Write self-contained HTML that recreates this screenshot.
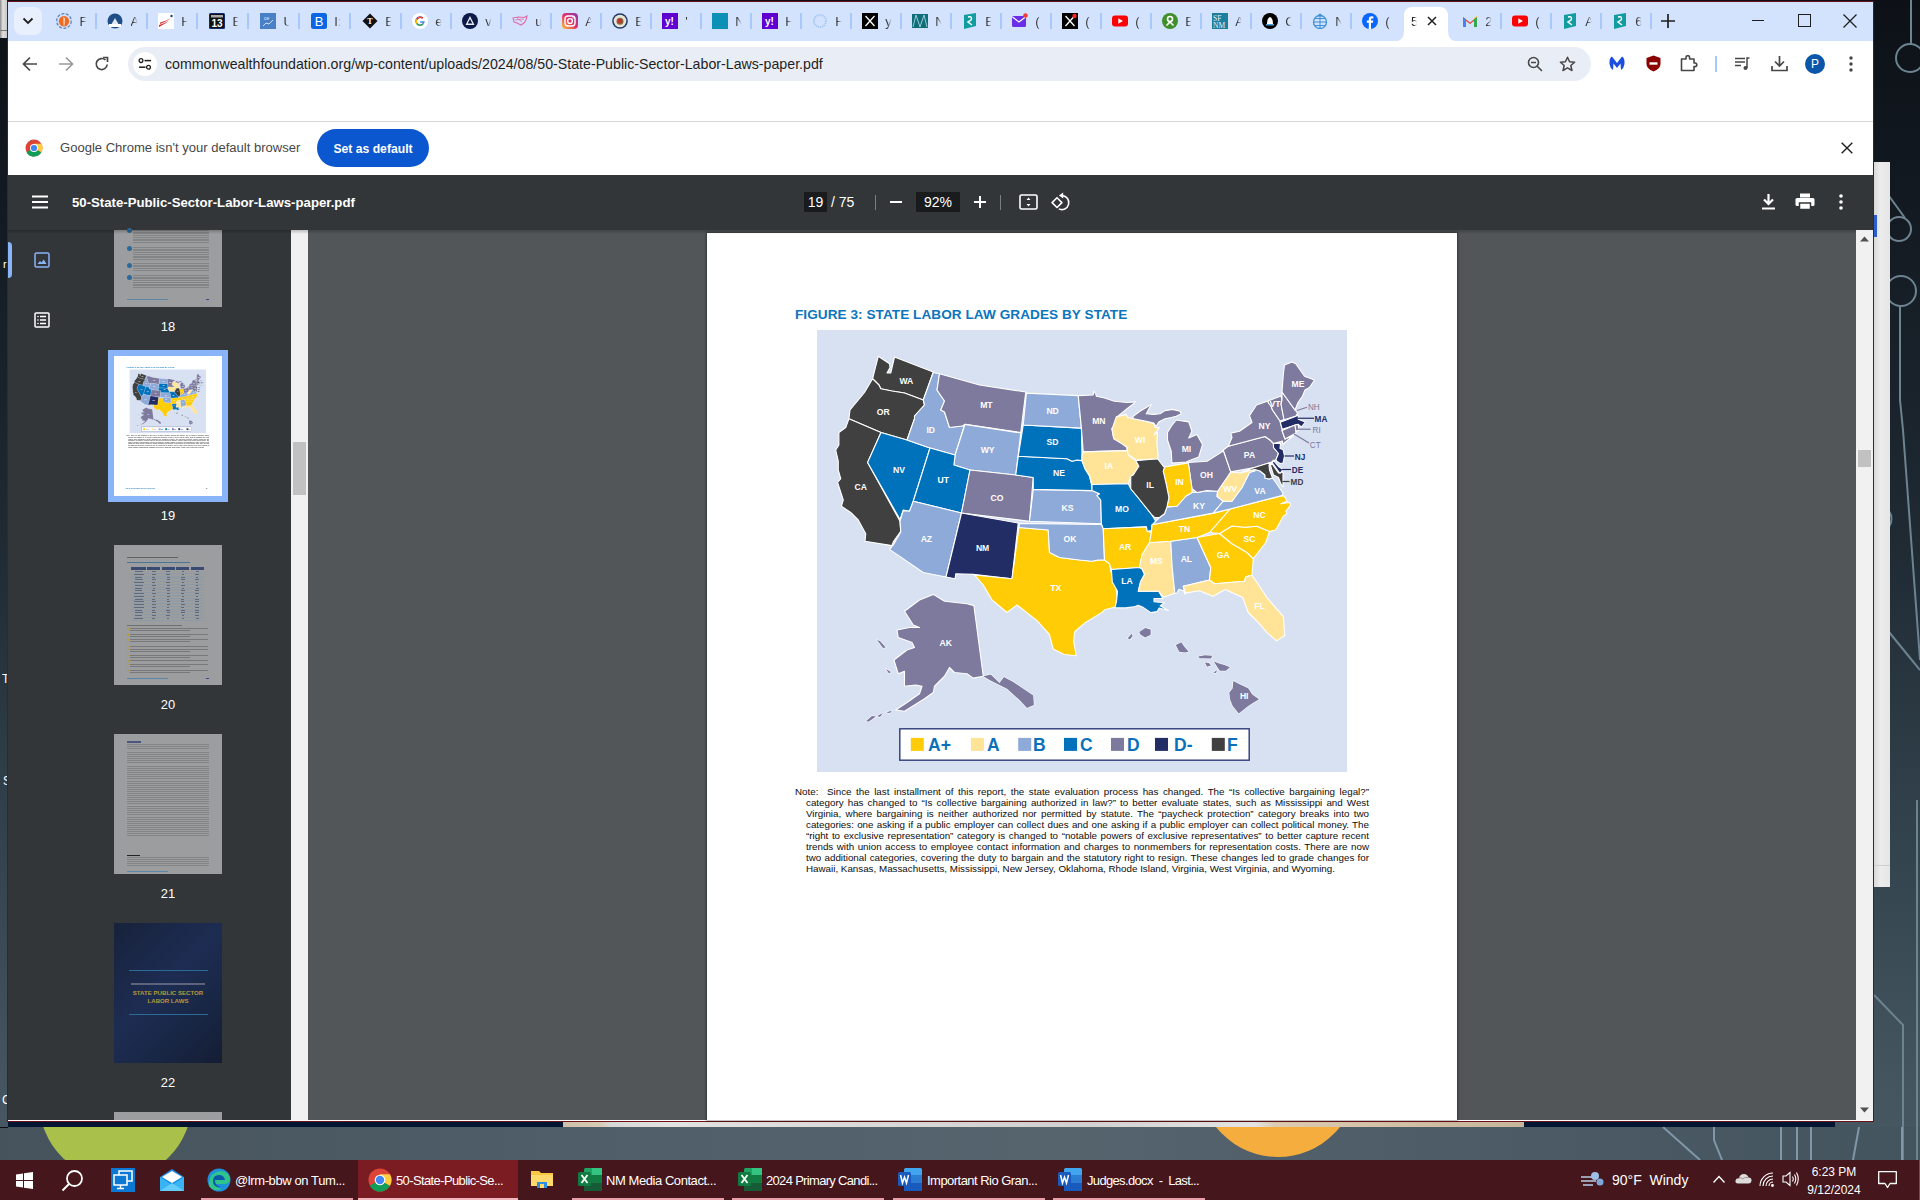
<!DOCTYPE html>
<html><head><meta charset="utf-8"><title>PDF</title>
<style>
*{margin:0;padding:0;box-sizing:border-box}
html,body{width:1920px;height:1200px;overflow:hidden;background:#2b3a44;font-family:"Liberation Sans",sans-serif}
.a{position:absolute}
.tx{position:absolute;white-space:nowrap}

</style></head><body>
<div class="a" style="left:0;top:0;width:1920px;height:1200px;background:linear-gradient(180deg,#0d1117 0%,#141b23 20%,#1f2a33 45%,#33434d 70%,#45555f 90%,#4a5a64 100%)"></div>
<div class="a" style="left:0;top:1127px;width:1920px;height:33px;background:linear-gradient(90deg,#46535c 0%,#4f5e68 30%,#56646e 55%,#4d5c66 75%,#44545e 100%)"></div>
<div class="a" style="left:0;top:0;width:7px;height:38px;background:linear-gradient(90deg,#8a8a8a,#e0e0e0 40%,#c8c8c8)"></div>
<div class="a" style="left:0;top:30px;width:7px;height:1px;background:#777"></div>
<svg class="a" style="left:1874px;top:0" width="46" height="1160" viewBox="1874 0 46 1160">
<g stroke="#6c8390" stroke-width="2" fill="none">
<path d="M1911 0 V44"/><circle cx="1910" cy="58" r="14"/>
<path d="M1889 196 L1905 218"/><circle cx="1899" cy="229" r="12"/>
<circle cx="1901" cy="291" r="15"/><path d="M1900 306 V400 L1903 430 L1920 660"/>
<path d="M1889 511 A14 14 0 0 1 1889 527" />
<path d="M1889 632 L1920 670"/>
<path d="M1874 995 L1903 1025 V1160"/><path d="M1917 800 V1160"/>
</g>
</svg>
<div class="a" style="left:1874px;top:162px;width:16px;height:725px;background:linear-gradient(90deg,#d9d9d9,#ececec 40%,#e6e6e6)"></div>
<div class="a" style="left:1874px;top:215px;width:3px;height:22px;background:#2a5fd0"></div>
<div class="a" style="left:1874px;top:865px;width:16px;height:1px;background:#cfcfcf"></div>
<div class="a" style="left:8px;top:1121px;width:1827px;height:6px;background:#021633"></div>
<div class="a" style="left:563px;top:1121px;width:961px;height:6px;background:linear-gradient(90deg,#cdbfa8 0%,#d8cbb6 4%,#d7d7d7 5%,#e2e2e2 11%,#d0d0d0 53%,#e4e4e4 72%,#dccbb0 74%,#c6b59b 100%)"></div>
<svg class="a" style="left:0;top:1127px" width="1920" height="33" viewBox="0 1127 1920 33">
<circle cx="115.5" cy="1103" r="76" fill="#a9c14a"/>
<circle cx="1278" cy="1078" r="79" fill="#f5ae3d"/>
<g stroke="#7f97a6" stroke-width="2" fill="none">
<path d="M1663 1127 L1700 1160"/><path d="M1714 1127 V1140 L1722 1160"/><path d="M1781 1127 V1160"/><path d="M1797 1127 V1160"/><path d="M1811 1127 V1160"/><path d="M1859 1127 L1853 1160"/><path d="M1902 1127 V1160"/>
</g>
</svg>
<div class="a" style="left:0;top:1127px;width:8px;height:1px;background:#0a0f14"></div>
<div class="tx" style="left:2px;top:672px;font-size:12px;color:#fff;width:5px;overflow:hidden;letter-spacing:0">T</div>
<div class="tx" style="left:3px;top:774px;font-size:12px;color:#fff;width:4px;overflow:hidden">S</div>
<div class="tx" style="left:2px;top:1093px;font-size:12px;color:#fff;width:5px;overflow:hidden">C</div>
<div class="tx" style="left:3px;top:258px;font-size:11px;color:#fff;width:4px;overflow:hidden">r</div>
<div class="a" style="left:7px;top:1px;width:1867px;height:1121px;border:1px solid #6b1016;background:#fff"></div>
<!-- tab strip -->
<div class="a" style="left:8px;top:2px;width:1865px;height:39px;background:#d3e3fd"></div>
<div class="a" style="left:14px;top:7px;width:28px;height:28px;border-radius:8px;background:#e9f0fd"></div>
<svg class="a" style="left:56.0px;top:13px" width="16" height="16" viewBox="0 0 16 16"><circle cx="8" cy="8" r="7.3" fill="none" stroke="#5b7fb8" stroke-width="1.2" stroke-dasharray="3 1.5"/><circle cx="8" cy="8.3" r="5.2" fill="#f26b21"/><path d="M7.5 4 L8.8 5.5 L8.4 12.5 L7.6 12.5 Z" fill="#fff"/></svg>
<div class="tx" style="left:79.5px;top:14px;font-size:13px;color:#3c3c3c;width:7px;overflow:hidden;-webkit-mask-image:linear-gradient(90deg,#000 35%,transparent 95%)">F</div>
<div class="a" style="left:94.5px;top:13px;width:2px;height:16px;background:#a8c7fa"></div>
<svg class="a" style="left:107.0px;top:13px" width="16" height="16" viewBox="0 0 16 16"><circle cx="8" cy="8" r="7.5" fill="#1f4f86"/><path d="M4 12 L8 5 L12 12 Z" fill="#dfe8f2"/><rect x="2" y="11" width="12" height="3" fill="#fff"/></svg>
<div class="tx" style="left:130.5px;top:14px;font-size:13px;color:#3c3c3c;width:7px;overflow:hidden;-webkit-mask-image:linear-gradient(90deg,#000 35%,transparent 95%)">A</div>
<div class="a" style="left:145.5px;top:13px;width:2px;height:16px;background:#a8c7fa"></div>
<svg class="a" style="left:157.8px;top:13px" width="16" height="16" viewBox="0 0 16 16"><rect x="0" y="0" width="16" height="16" fill="#fff"/><path d="M1 14 Q8 11 14 5 Q9 10 1 12 Z" fill="#d7262f"/><path d="M2 11 Q8 9 13 5 Q8 8 2 9.5Z" fill="#e0363e"/><circle cx="13.5" cy="3" r="1.2" fill="#1d3c88"/></svg>
<div class="tx" style="left:181.3px;top:14px;font-size:13px;color:#3c3c3c;width:7px;overflow:hidden;-webkit-mask-image:linear-gradient(90deg,#000 35%,transparent 95%)">H</div>
<div class="a" style="left:196.3px;top:13px;width:2px;height:16px;background:#a8c7fa"></div>
<svg class="a" style="left:208.9px;top:13px" width="16" height="16" viewBox="0 0 16 16"><rect x="0" y="0" width="16" height="16" rx="1.5" fill="#0d2a78"/><rect x="1" y="1" width="14" height="14" fill="#111"/><text x="8" y="14" font-family="Liberation Sans" font-weight="bold" font-size="10" fill="#fff" text-anchor="middle">13</text><rect x="2" y="2" width="12" height="2.5" fill="#aaa"/></svg>
<div class="tx" style="left:232.4px;top:14px;font-size:13px;color:#3c3c3c;width:7px;overflow:hidden;-webkit-mask-image:linear-gradient(90deg,#000 35%,transparent 95%)">E</div>
<div class="a" style="left:247.4px;top:13px;width:2px;height:16px;background:#a8c7fa"></div>
<svg class="a" style="left:259.9px;top:13px" width="16" height="16" viewBox="0 0 16 16"><rect width="16" height="16" fill="#4a80c8"/><path d="M3 13 L6 10 L9 11 L13 7" stroke="#cfe0f5" stroke-width="1" fill="none"/><text x="4" y="7" font-size="5" fill="#e6eef8" font-family="Liberation Sans">ce</text></svg>
<div class="tx" style="left:283.4px;top:14px;font-size:13px;color:#3c3c3c;width:7px;overflow:hidden;-webkit-mask-image:linear-gradient(90deg,#000 35%,transparent 95%)">U</div>
<div class="a" style="left:298.4px;top:13px;width:2px;height:16px;background:#a8c7fa"></div>
<svg class="a" style="left:310.8px;top:13px" width="16" height="16" viewBox="0 0 16 16"><rect width="16" height="16" rx="2.5" fill="#0a66e4"/><text x="8" y="13" font-family="Liberation Sans" font-size="13" fill="#fff" text-anchor="middle">B</text></svg>
<div class="tx" style="left:334.2px;top:14px;font-size:13px;color:#3c3c3c;width:7px;overflow:hidden;-webkit-mask-image:linear-gradient(90deg,#000 35%,transparent 95%)">I:</div>
<div class="a" style="left:349.2px;top:13px;width:2px;height:16px;background:#a8c7fa"></div>
<svg class="a" style="left:361.8px;top:13px" width="16" height="16" viewBox="0 0 16 16"><path d="M8 0.5 L15.5 8 L8 15.5 L0.5 8 Z" fill="#111"/><text x="8" y="11" font-family="Liberation Serif" font-weight="bold" font-size="8" fill="#fff" text-anchor="middle">T</text></svg>
<div class="tx" style="left:385.2px;top:14px;font-size:13px;color:#3c3c3c;width:7px;overflow:hidden;-webkit-mask-image:linear-gradient(90deg,#000 35%,transparent 95%)">E</div>
<div class="a" style="left:400.2px;top:13px;width:2px;height:16px;background:#a8c7fa"></div>
<svg class="a" style="left:411.8px;top:13px" width="16" height="16" viewBox="0 0 16 16"><circle cx="8" cy="8" r="8" fill="#fff"/><path d="M12.8 8.2 H8.2 V9.8 H11 A3.2 3.2 0 1 1 10.2 5.7 L11.4 4.6 A4.8 4.8 0 1 0 12.8 8.2 Z" fill="#4285f4"/><path d="M4.1 6 A4.8 4.8 0 0 1 11.4 4.6 L10.2 5.7 A3.2 3.2 0 0 0 5.4 6.9Z" fill="#ea4335"/><path d="M4.1 6 L5.4 6.9 A3.2 3.2 0 0 0 5.6 10.2 L4.3 11 A4.8 4.8 0 0 1 4.1 6Z" fill="#fbbc05"/><path d="M4.3 11 L5.6 10.2 A3.2 3.2 0 0 0 10.4 10.5 L11.6 11.5 A4.8 4.8 0 0 1 4.3 11Z" fill="#34a853"/></svg>
<div class="tx" style="left:435.2px;top:14px;font-size:13px;color:#3c3c3c;width:7px;overflow:hidden;-webkit-mask-image:linear-gradient(90deg,#000 35%,transparent 95%)">e</div>
<div class="a" style="left:450.2px;top:13px;width:2px;height:16px;background:#a8c7fa"></div>
<svg class="a" style="left:461.8px;top:13px" width="16" height="16" viewBox="0 0 16 16"><circle cx="8" cy="8" r="8" fill="#0d1947"/><path d="M8 3 L12.5 12 L3.5 12 Z M8 6 L10.3 10.5 L5.7 10.5Z" fill="#e9ecf4" fill-rule="evenodd"/></svg>
<div class="tx" style="left:485.2px;top:14px;font-size:13px;color:#3c3c3c;width:7px;overflow:hidden;-webkit-mask-image:linear-gradient(90deg,#000 35%,transparent 95%)">v</div>
<div class="a" style="left:500.2px;top:13px;width:2px;height:16px;background:#a8c7fa"></div>
<svg class="a" style="left:511.8px;top:13px" width="16" height="16" viewBox="0 0 16 16"><path d="M1 5 L6 4 L12 4.5 L15 3 L14 7 L12 10 L9 12 L5 10 L2 9 Z" fill="none" stroke="#e36aa8" stroke-width="1.1"/><path d="M3 7 L12 6 M5 5 L10 9" stroke="#e36aa8" stroke-width="0.8"/></svg>
<div class="tx" style="left:535.2px;top:14px;font-size:13px;color:#3c3c3c;width:7px;overflow:hidden;-webkit-mask-image:linear-gradient(90deg,#000 35%,transparent 95%)">u</div>
<div class="a" style="left:550.2px;top:13px;width:2px;height:16px;background:#a8c7fa"></div>
<svg class="a" style="left:561.8px;top:13px" width="16" height="16" viewBox="0 0 16 16"><defs><linearGradient id="ig" x1="0" y1="1" x2="1" y2="0"><stop offset="0" stop-color="#fdc830"/><stop offset="0.5" stop-color="#e1306c"/><stop offset="1" stop-color="#833ab4"/></linearGradient></defs><rect width="16" height="16" rx="4" fill="url(#ig)"/><rect x="3" y="3" width="10" height="10" rx="3" fill="none" stroke="#fff" stroke-width="1.4"/><circle cx="8" cy="8" r="2.4" fill="none" stroke="#fff" stroke-width="1.4"/><circle cx="11" cy="5" r="0.7" fill="#fff"/></svg>
<div class="tx" style="left:585.2px;top:14px;font-size:13px;color:#3c3c3c;width:7px;overflow:hidden;-webkit-mask-image:linear-gradient(90deg,#000 35%,transparent 95%)">A</div>
<div class="a" style="left:600.2px;top:13px;width:2px;height:16px;background:#a8c7fa"></div>
<svg class="a" style="left:611.8px;top:13px" width="16" height="16" viewBox="0 0 16 16"><circle cx="8" cy="8" r="7.8" fill="#1c3a6e"/><circle cx="8" cy="8" r="6.3" fill="#e9e4d6"/><circle cx="8" cy="8.3" r="3.5" fill="#8a6a3a"/><rect x="6" y="6" width="4" height="4" fill="#b33"/></svg>
<div class="tx" style="left:635.2px;top:14px;font-size:13px;color:#3c3c3c;width:7px;overflow:hidden;-webkit-mask-image:linear-gradient(90deg,#000 35%,transparent 95%)">E</div>
<div class="a" style="left:650.2px;top:13px;width:2px;height:16px;background:#a8c7fa"></div>
<svg class="a" style="left:661.8px;top:13px" width="16" height="16" viewBox="0 0 16 16"><rect width="16" height="16" fill="#6001d2"/><text x="7.5" y="12" font-family="Liberation Sans" font-weight="bold" font-size="10" fill="#fff" text-anchor="middle">y!</text></svg>
<div class="tx" style="left:685.2px;top:14px;font-size:13px;color:#3c3c3c;width:7px;overflow:hidden;-webkit-mask-image:linear-gradient(90deg,#000 35%,transparent 95%)">'</div>
<div class="a" style="left:700.2px;top:13px;width:2px;height:16px;background:#a8c7fa"></div>
<svg class="a" style="left:711.8px;top:13px" width="16" height="16" viewBox="0 0 16 16"><rect width="16" height="16" fill="#0d90b6"/></svg>
<div class="tx" style="left:735.2px;top:14px;font-size:13px;color:#3c3c3c;width:7px;overflow:hidden;-webkit-mask-image:linear-gradient(90deg,#000 35%,transparent 95%)">N</div>
<div class="a" style="left:750.2px;top:13px;width:2px;height:16px;background:#a8c7fa"></div>
<svg class="a" style="left:761.8px;top:13px" width="16" height="16" viewBox="0 0 16 16"><rect width="16" height="16" fill="#6001d2"/><text x="7.5" y="12" font-family="Liberation Sans" font-weight="bold" font-size="10" fill="#fff" text-anchor="middle">y!</text></svg>
<div class="tx" style="left:785.2px;top:14px;font-size:13px;color:#3c3c3c;width:7px;overflow:hidden;-webkit-mask-image:linear-gradient(90deg,#000 35%,transparent 95%)">H</div>
<div class="a" style="left:800.2px;top:13px;width:2px;height:16px;background:#a8c7fa"></div>
<svg class="a" style="left:811.8px;top:13px" width="16" height="16" viewBox="0 0 16 16"><circle cx="8" cy="8" r="6" fill="none" stroke="#9ec3ee" stroke-width="2" stroke-dasharray="1 1"/></svg>
<div class="tx" style="left:835.2px;top:14px;font-size:13px;color:#3c3c3c;width:7px;overflow:hidden;-webkit-mask-image:linear-gradient(90deg,#000 35%,transparent 95%)">H</div>
<div class="a" style="left:850.2px;top:13px;width:2px;height:16px;background:#a8c7fa"></div>
<svg class="a" style="left:861.8px;top:13px" width="16" height="16" viewBox="0 0 16 16"><rect width="16" height="16" fill="#000"/><path d="M3.5 3 L12.5 13 M12.5 3 L3.5 13" stroke="#fff" stroke-width="1.3"/></svg>
<div class="tx" style="left:885.2px;top:14px;font-size:13px;color:#3c3c3c;width:7px;overflow:hidden;-webkit-mask-image:linear-gradient(90deg,#000 35%,transparent 95%)">y</div>
<div class="a" style="left:900.2px;top:13px;width:2px;height:16px;background:#a8c7fa"></div>
<svg class="a" style="left:911.8px;top:13px" width="16" height="16" viewBox="0 0 16 16"><rect y="1" width="16" height="14" fill="#0d6d78"/><path d="M1 14 L4 2 L8 14 L12 2 L15 14" stroke="#a9d6db" stroke-width="0.9" fill="none"/></svg>
<div class="tx" style="left:935.2px;top:14px;font-size:13px;color:#3c3c3c;width:7px;overflow:hidden;-webkit-mask-image:linear-gradient(90deg,#000 35%,transparent 95%)">N</div>
<div class="a" style="left:950.2px;top:13px;width:2px;height:16px;background:#a8c7fa"></div>
<svg class="a" style="left:961.8px;top:13px" width="16" height="16" viewBox="0 0 16 16"><path d="M2 2 L14 0 L14 13 L2 16 Z" fill="#119ca0"/><path d="M6 4 Q11 3 9 7 L6 9 L10 12" stroke="#fff" stroke-width="1.5" fill="none"/></svg>
<div class="tx" style="left:985.2px;top:14px;font-size:13px;color:#3c3c3c;width:7px;overflow:hidden;-webkit-mask-image:linear-gradient(90deg,#000 35%,transparent 95%)">E</div>
<div class="a" style="left:1000.2px;top:13px;width:2px;height:16px;background:#a8c7fa"></div>
<svg class="a" style="left:1011.8px;top:13px" width="16" height="16" viewBox="0 0 16 16"><rect x="0" y="3" width="14" height="11" rx="1.5" fill="#6a2ee8"/><path d="M0.5 4 L7 9 L13.5 4" stroke="#fff" stroke-width="1.2" fill="none"/><circle cx="13.5" cy="2.5" r="2.3" fill="#f43b3b"/></svg>
<div class="tx" style="left:1035.2px;top:14px;font-size:13px;color:#3c3c3c;width:7px;overflow:hidden;-webkit-mask-image:linear-gradient(90deg,#000 35%,transparent 95%)">(</div>
<div class="a" style="left:1050.2px;top:13px;width:2px;height:16px;background:#a8c7fa"></div>
<svg class="a" style="left:1061.8px;top:13px" width="16" height="16" viewBox="0 0 16 16"><rect width="16" height="16" fill="#000"/><path d="M3.5 3 L12.5 13 M12.5 3 L3.5 13" stroke="#fff" stroke-width="1.3"/><circle cx="12.5" cy="3" r="2.2" fill="#f22"/></svg>
<div class="tx" style="left:1085.2px;top:14px;font-size:13px;color:#3c3c3c;width:7px;overflow:hidden;-webkit-mask-image:linear-gradient(90deg,#000 35%,transparent 95%)">(</div>
<div class="a" style="left:1100.2px;top:13px;width:2px;height:16px;background:#a8c7fa"></div>
<svg class="a" style="left:1111.8px;top:13px" width="16" height="16" viewBox="0 0 16 16"><rect x="0" y="2.5" width="16" height="11" rx="3" fill="#ff0000"/><path d="M6.3 5.3 L11 8 L6.3 10.7 Z" fill="#fff"/></svg>
<div class="tx" style="left:1135.2px;top:14px;font-size:13px;color:#3c3c3c;width:7px;overflow:hidden;-webkit-mask-image:linear-gradient(90deg,#000 35%,transparent 95%)">(</div>
<div class="a" style="left:1150.2px;top:13px;width:2px;height:16px;background:#a8c7fa"></div>
<svg class="a" style="left:1161.8px;top:13px" width="16" height="16" viewBox="0 0 16 16"><circle cx="8" cy="8" r="8" fill="#3f8f2a"/><circle cx="8" cy="6" r="2.5" fill="none" stroke="#fff" stroke-width="1.6"/><path d="M4.5 12.5 L8 9 L11.5 12.5" stroke="#fff" stroke-width="1.6" fill="none"/></svg>
<div class="tx" style="left:1185.2px;top:14px;font-size:13px;color:#3c3c3c;width:7px;overflow:hidden;-webkit-mask-image:linear-gradient(90deg,#000 35%,transparent 95%)">E</div>
<div class="a" style="left:1200.2px;top:13px;width:2px;height:16px;background:#a8c7fa"></div>
<svg class="a" style="left:1211.8px;top:13px" width="16" height="16" viewBox="0 0 16 16"><rect width="16" height="16" fill="#1b7fa0"/><text x="1" y="7.5" font-family="Liberation Serif" font-size="7.5" fill="#e8f2f6">SF</text><text x="1" y="15" font-family="Liberation Serif" font-size="7.5" fill="#e8f2f6">NM</text></svg>
<div class="tx" style="left:1235.2px;top:14px;font-size:13px;color:#3c3c3c;width:7px;overflow:hidden;-webkit-mask-image:linear-gradient(90deg,#000 35%,transparent 95%)">A</div>
<div class="a" style="left:1250.2px;top:13px;width:2px;height:16px;background:#a8c7fa"></div>
<svg class="a" style="left:1261.8px;top:13px" width="16" height="16" viewBox="0 0 16 16"><circle cx="8" cy="8" r="8" fill="#000"/><path d="M5 11 Q5 5 8 4 Q11 5 11 11 Z" fill="#fff"/><rect x="4" y="11" width="8" height="1.5" fill="#4aa3df"/></svg>
<div class="tx" style="left:1285.2px;top:14px;font-size:13px;color:#3c3c3c;width:7px;overflow:hidden;-webkit-mask-image:linear-gradient(90deg,#000 35%,transparent 95%)">C</div>
<div class="a" style="left:1300.2px;top:13px;width:2px;height:16px;background:#a8c7fa"></div>
<svg class="a" style="left:1311.8px;top:13px" width="16" height="16" viewBox="0 0 16 16"><circle cx="8" cy="9" r="6.5" fill="none" stroke="#3d8fd8" stroke-width="1.3"/><path d="M1.5 9 H14.5 M8 2.5 V15.5 M3 5.5 H13 M3 12.5 H13" stroke="#3d8fd8" stroke-width="1"/><circle cx="8" cy="2" r="1.5" fill="#3d8fd8"/></svg>
<div class="tx" style="left:1335.2px;top:14px;font-size:13px;color:#3c3c3c;width:7px;overflow:hidden;-webkit-mask-image:linear-gradient(90deg,#000 35%,transparent 95%)">N</div>
<div class="a" style="left:1350.2px;top:13px;width:2px;height:16px;background:#a8c7fa"></div>
<svg class="a" style="left:1361.8px;top:13px" width="16" height="16" viewBox="0 0 16 16"><circle cx="8" cy="8" r="8" fill="#0866ff"/><path d="M9 16 V9.8 H11 L11.3 7.6 H9 V6.3 Q9 5.4 10 5.4 H11.4 V3.5 Q10.5 3.3 9.6 3.3 Q6.8 3.3 6.8 6.1 V7.6 H4.8 V9.8 H6.8 V16 Z" fill="#fff"/></svg>
<div class="tx" style="left:1385.2px;top:14px;font-size:13px;color:#3c3c3c;width:7px;overflow:hidden;-webkit-mask-image:linear-gradient(90deg,#000 35%,transparent 95%)">(</div>
<svg class="a" style="left:1461.8px;top:13px" width="16" height="16" viewBox="0 0 16 16"><path d="M1 14 V4 L8 9.5 L15 4 V14 H12 V8 L8 11 L4 8 V14 Z" fill="#ea4335"/><path d="M1 14 V4 L4 6.3 V14Z" fill="#4285f4"/><path d="M15 14 V4 L12 6.3 V14Z" fill="#34a853"/><path d="M12 6.3 L15 4 V3 L12 5.3Z" fill="#fbbc04"/></svg>
<div class="tx" style="left:1485.2px;top:14px;font-size:13px;color:#3c3c3c;width:7px;overflow:hidden;-webkit-mask-image:linear-gradient(90deg,#000 35%,transparent 95%)">2</div>
<div class="a" style="left:1500.2px;top:13px;width:2px;height:16px;background:#a8c7fa"></div>
<svg class="a" style="left:1511.8px;top:13px" width="16" height="16" viewBox="0 0 16 16"><rect x="0" y="2.5" width="16" height="11" rx="3" fill="#ff0000"/><path d="M6.3 5.3 L11 8 L6.3 10.7 Z" fill="#fff"/></svg>
<div class="tx" style="left:1535.2px;top:14px;font-size:13px;color:#3c3c3c;width:7px;overflow:hidden;-webkit-mask-image:linear-gradient(90deg,#000 35%,transparent 95%)">(</div>
<div class="a" style="left:1550.2px;top:13px;width:2px;height:16px;background:#a8c7fa"></div>
<svg class="a" style="left:1561.8px;top:13px" width="16" height="16" viewBox="0 0 16 16"><path d="M2 2 L14 0 L14 13 L2 16 Z" fill="#119ca0"/><path d="M6 4 Q11 3 9 7 L6 9 L10 12" stroke="#fff" stroke-width="1.5" fill="none"/></svg>
<div class="tx" style="left:1585.2px;top:14px;font-size:13px;color:#3c3c3c;width:7px;overflow:hidden;-webkit-mask-image:linear-gradient(90deg,#000 35%,transparent 95%)">A</div>
<div class="a" style="left:1600.2px;top:13px;width:2px;height:16px;background:#a8c7fa"></div>
<svg class="a" style="left:1611.8px;top:13px" width="16" height="16" viewBox="0 0 16 16"><path d="M2 2 L14 0 L14 13 L2 16 Z" fill="#119ca0"/><path d="M6 4 Q11 3 9 7 L6 9 L10 12" stroke="#fff" stroke-width="1.5" fill="none"/></svg>
<div class="tx" style="left:1635.2px;top:14px;font-size:13px;color:#3c3c3c;width:7px;overflow:hidden;-webkit-mask-image:linear-gradient(90deg,#000 35%,transparent 95%)">6</div>
<div class="a" style="left:1650.2px;top:13px;width:2px;height:16px;background:#a8c7fa"></div>
<div class="a" style="left:1404px;top:7px;width:44px;height:35px;background:#fff;border-radius:8px 8px 0 0"></div>
<svg class="a" style="left:1394px;top:31px" width="64" height="11" viewBox="0 0 64 11"><path d="M0 10.5 Q10 10.5 10 0 L10 11 L0 11 Z M64 10.5 Q54 10.5 54 0 L54 11 L64 11 Z" fill="#fff"/></svg>
<div class="tx" style="left:1411px;top:14px;font-size:13px;color:#1f1f1f;width:6px;overflow:hidden;-webkit-mask-image:linear-gradient(90deg,#000 40%,transparent 100%)">5</div>
<svg class="a" style="left:1427px;top:16px" width="10" height="10" viewBox="0 0 10 10"><path d="M1 1 L9 9 M9 1 L1 9" stroke="#1f1f1f" stroke-width="1.5"/></svg>
<svg class="a" style="left:1661px;top:14px" width="14" height="14" viewBox="0 0 14 14"><path d="M7 0 V14 M0 7 H14" stroke="#1f1f1f" stroke-width="1.7"/></svg>
<div class="a" style="left:1752px;top:20px;width:12px;height:1px;background:#1f1f1f"></div>
<div class="a" style="left:1798px;top:14px;width:13px;height:13px;border:1.3px solid #1f1f1f"></div>
<svg class="a" style="left:1843px;top:14px" width="14" height="14" viewBox="0 0 14 14"><path d="M0.5 0.5 L13.5 13.5 M13.5 0.5 L0.5 13.5" stroke="#1f1f1f" stroke-width="1.3"/></svg>
<svg class="a" style="left:22px;top:17px" width="12" height="8" viewBox="0 0 12 8"><path d="M1.5 1.5 L6 6 L10.5 1.5" stroke="#1f1f1f" stroke-width="1.8" fill="none"/></svg>
<!-- toolbar -->
<div class="a" style="left:8px;top:41px;width:1865px;height:80px;background:#fff;border-radius:8px 8px 0 0"></div>
<div class="a" style="left:128px;top:47px;width:1463px;height:34px;border-radius:17px;background:#e9eef6"></div>
<div class="a" style="left:133px;top:52px;width:24px;height:24px;border-radius:12px;background:#fff"></div>
<div class="tx" style="left:165px;top:55.5px;font-size:14.2px;color:#1f1f1f">commonwealthfoundation.org/wp-content/uploads/2024/08/50-State-Public-Sector-Labor-Laws-paper.pdf</div>
<div class="a" style="left:8px;top:121px;width:1865px;height:1px;background:#d6d6d6"></div>
<svg class="a" style="left:22px;top:56px" width="16" height="16" viewBox="0 0 16 16"><path d="M15 8 H2 M8 1.5 L1.5 8 L8 14.5" stroke="#474747" stroke-width="1.7" fill="none"/></svg>
<svg class="a" style="left:58px;top:56px" width="16" height="16" viewBox="0 0 16 16"><path d="M1 8 H14 M8 1.5 L14.5 8 L8 14.5" stroke="#9a9a9a" stroke-width="1.7" fill="none"/></svg>
<svg class="a" style="left:94px;top:56px" width="16" height="16" viewBox="0 0 16 16"><path d="M13.2 8.5 A5.5 5.5 0 1 1 11.5 4" stroke="#474747" stroke-width="1.7" fill="none"/><path d="M9 1.5 H13.5 V6" stroke="#474747" stroke-width="1.7" fill="none"/></svg>
<svg class="a" style="left:138px;top:58px" width="14" height="12" viewBox="0 0 14 12"><circle cx="3" cy="2.6" r="1.9" stroke="#1f1f1f" stroke-width="1.3" fill="none"/><path d="M6.5 2.6 H13" stroke="#1f1f1f" stroke-width="1.5"/><circle cx="10.5" cy="9.2" r="1.9" stroke="#1f1f1f" stroke-width="1.3" fill="none"/><path d="M1 9.2 H7.5" stroke="#1f1f1f" stroke-width="1.5"/></svg>
<svg class="a" style="left:1527px;top:56px" width="16" height="16" viewBox="0 0 16 16"><circle cx="6.5" cy="6.5" r="5" stroke="#474747" stroke-width="1.6" fill="none"/><path d="M10.2 10.2 L15 15 M4 6.5 H9" stroke="#474747" stroke-width="1.6"/></svg>
<svg class="a" style="left:1559px;top:56px" width="17" height="16" viewBox="0 0 17 16"><path d="M8.5 1.2 L10.6 5.8 L15.6 6.2 L11.8 9.5 L13 14.5 L8.5 11.8 L4 14.5 L5.2 9.5 L1.4 6.2 L6.4 5.8 Z" stroke="#474747" stroke-width="1.5" fill="none" stroke-linejoin="round"/></svg>
<svg class="a" style="left:1608px;top:55px" width="18" height="17" viewBox="0 0 18 17"><path d="M1.5 9 Q1 3 4 1.5 L9 8 L14 1.5 Q17 3 16.5 9 Q16 13 13 15 L12.5 8.5 L9 13 L5.5 8.5 L5 15 Q2 13 1.5 9Z" fill="#1d4ede"/></svg>
<svg class="a" style="left:1646px;top:55px" width="15" height="17" viewBox="0 0 15 17"><path d="M7.5 0.5 L14.5 3 V9 Q14.5 14 7.5 16.5 Q0.5 14 0.5 9 V3 Z" fill="#8b0000"/><rect x="3.5" y="7.3" width="8" height="2.4" fill="#fff"/></svg>
<svg class="a" style="left:1680px;top:55px" width="18" height="17" viewBox="0 0 18 17"><path d="M1.5 4 H6 V2.5 A1.8 1.8 0 0 1 9.6 2.5 V4 H14 V8 H15 A1.8 1.8 0 0 1 15 11.6 H14 V15.5 H1.5 Z" stroke="#474747" stroke-width="1.6" fill="none" stroke-linejoin="round"/></svg>
<div class="a" style="left:1715px;top:56px;width:2px;height:16px;background:#a8c7fa"></div>
<svg class="a" style="left:1735px;top:57px" width="16" height="14" viewBox="0 0 16 14"><path d="M0 1.5 H10 M0 5 H10 M0 8.5 H6" stroke="#474747" stroke-width="1.4"/><path d="M14.5 1 H12 V11" stroke="#474747" stroke-width="1.5" fill="none"/><circle cx="10.5" cy="11" r="2" fill="#474747"/></svg>
<svg class="a" style="left:1771px;top:55px" width="17" height="17" viewBox="0 0 17 17"><path d="M8.5 1 V11 M4 6.5 L8.5 11 L13 6.5 M1 11 V15.5 H16 V11" stroke="#474747" stroke-width="1.7" fill="none"/></svg>
<div class="a" style="left:1805px;top:54px;width:20px;height:20px;border-radius:10px;background:#0b56a8;color:#fff;font-size:12px;line-height:20px;text-align:center">P</div>
<svg class="a" style="left:1849px;top:56px" width="4" height="16" viewBox="0 0 4 16"><circle cx="2" cy="2" r="1.7" fill="#474747"/><circle cx="2" cy="8" r="1.7" fill="#474747"/><circle cx="2" cy="14" r="1.7" fill="#474747"/></svg>

<!-- infobar -->
<div class="a" style="left:8px;top:122px;width:1865px;height:53px;background:#fff"></div>
<svg class="a" style="left:25px;top:139px" width="18" height="18" viewBox="0 0 18 18"><circle cx="9" cy="9" r="8.5" fill="#db4437"/><path d="M9 9 L1.6 13.25 A8.5 8.5 0 0 0 9 17.5 A8.5 8.5 0 0 0 16.4 13.25 Z" fill="#0f9d58"/><path d="M9 9 L16.4 13.25 A8.5 8.5 0 0 0 16.4 4.75 L9 4.75Z" fill="#ffcd40"/><path d="M9 9 L9 17.5 A8.5 8.5 0 0 1 1.6 13.25Z" fill="#0f9d58"/><circle cx="9" cy="9" r="4" fill="#fff"/><circle cx="9" cy="9" r="3.1" fill="#4285f4"/></svg>
<div class="tx" style="left:60px;top:140px;font-size:13.05px;color:#474747">Google Chrome isn't your default browser</div>
<div class="a" style="left:317px;top:129px;width:112px;height:38px;border-radius:19px;background:#0b57d0"></div>
<div class="tx" style="left:317px;top:141.5px;width:112px;text-align:center;font-size:12.2px;font-weight:bold;color:#fff">Set as default</div>
<svg class="a" style="left:1841px;top:142px" width="12" height="12" viewBox="0 0 12 12"><path d="M0.7 0.7 L11.3 11.3 M11.3 0.7 L0.7 11.3" stroke="#1f1f1f" stroke-width="1.4"/></svg>

<!-- pdf toolbar -->
<div class="a" style="left:8px;top:175px;width:1865px;height:55px;background:#323639"></div>
<svg class="a" style="left:32px;top:195px" width="16" height="14" viewBox="0 0 16 14"><path d="M0 1.5 H16 M0 7 H16 M0 12.5 H16" stroke="#fff" stroke-width="2"/></svg>
<div class="tx" style="left:72px;top:195px;font-size:13.2px;font-weight:bold;color:#fff">50-State-Public-Sector-Labor-Laws-paper.pdf</div>
<div class="a" style="left:804px;top:192px;width:23px;height:20px;background:#191b1c"></div>
<div class="tx" style="left:804px;top:194px;width:23px;text-align:center;font-size:14px;color:#fff">19</div>
<div class="tx" style="left:831px;top:194px;font-size:14px;color:#fff">/ 75</div>
<div class="a" style="left:875px;top:195px;width:1px;height:15px;background:#7b7e80"></div>
<div class="a" style="left:890px;top:201px;width:12px;height:2px;background:#fff"></div>
<div class="a" style="left:916px;top:192px;width:44px;height:20px;background:#191b1c"></div>
<div class="tx" style="left:916px;top:194px;width:44px;text-align:center;font-size:14px;color:#fff">92%</div>
<svg class="a" style="left:974px;top:196px" width="12" height="12" viewBox="0 0 12 12"><path d="M6 0 V12 M0 6 H12" stroke="#fff" stroke-width="2"/></svg>
<div class="a" style="left:1000px;top:195px;width:1px;height:15px;background:#7b7e80"></div>
<svg class="a" style="left:1019px;top:194px" width="19" height="16" viewBox="0 0 19 16"><rect x="1" y="1" width="17" height="14" rx="1.5" stroke="#fff" stroke-width="1.6" fill="none"/><path d="M9.5 3.5 L7.5 6 H11.5Z M9.5 12.5 L7.5 10 H11.5Z" fill="#fff"/></svg>
<svg class="a" style="left:1051px;top:192px" width="20" height="20" viewBox="0 0 20 20"><path d="M6 5.7 L10.9 10.6 L6 15.5 L1.1 10.6 Z" stroke="#fff" stroke-width="1.6" fill="none" stroke-linejoin="round"/><path d="M11.3 3.6 A7 7 0 1 1 7.8 16.9" stroke="#fff" stroke-width="1.6" fill="none"/><path d="M12.2 0.6 L7.9 3.6 L12.2 6.6 Z" fill="#fff"/></svg>
<svg class="a" style="left:1761px;top:193px" width="15" height="17" viewBox="0 0 15 17"><path d="M7.5 1 V11 M3 6.5 L7.5 11 L12 6.5" stroke="#fff" stroke-width="2.2" fill="none"/><path d="M1 15.5 H14" stroke="#fff" stroke-width="2"/></svg>
<svg class="a" style="left:1795px;top:193px" width="20" height="17" viewBox="0 0 20 17"><rect x="5" y="0.5" width="10" height="4" fill="#fff"/><rect x="0.5" y="5" width="19" height="8" rx="1.5" fill="#fff"/><rect x="4.5" y="10" width="11" height="6.5" fill="#fff" stroke="#323639" stroke-width="1.5"/></svg>
<svg class="a" style="left:1839px;top:194px" width="4" height="16" viewBox="0 0 4 16"><circle cx="2" cy="2" r="1.8" fill="#fff"/><circle cx="2" cy="8" r="1.8" fill="#fff"/><circle cx="2" cy="14" r="1.8" fill="#fff"/></svg>

<!-- sidebar -->
<div class="a" style="left:8px;top:230px;width:283px;height:890px;background:#323639"></div>
<div class="a" style="left:8px;top:242px;width:4px;height:36px;background:#8ab4f8;border-radius:0 4px 4px 0"></div>
<svg class="a" style="left:34px;top:252px" width="16" height="16" viewBox="0 0 16 16"><rect x="1" y="1" width="14" height="14" rx="1.5" stroke="#8ab4f8" stroke-width="1.5" fill="none"/><path d="M3.5 12 L6 9 L7.5 10.5 L9.8 7.5 L12.5 12 Z" fill="#8ab4f8"/></svg>
<svg class="a" style="left:34px;top:312px" width="16" height="16" viewBox="0 0 16 16"><rect x="1" y="1" width="14" height="14" rx="1" stroke="#fff" stroke-width="1.5" fill="none"/><path d="M6 4.5 H12 M6 8 H12 M6 11.5 H12" stroke="#fff" stroke-width="1.4"/><circle cx="4" cy="4.5" r="0.8" fill="#fff"/><circle cx="4" cy="8" r="0.8" fill="#fff"/><circle cx="4" cy="11.5" r="0.8" fill="#fff"/></svg>
<div class="a" style="left:114px;top:230px;width:108px;height:77px;background:#9c9d9e"></div>
<div class="a" style="left:133px;top:230px;width:76px;height:13px;background:repeating-linear-gradient(180deg,rgba(40,42,46,0.22) 0 1px,transparent 1px 1.7px)"></div>
<div class="a" style="left:133px;top:247px;width:76px;height:13px;background:repeating-linear-gradient(180deg,rgba(40,42,46,0.22) 0 1px,transparent 1px 1.7px)"></div>
<div class="a" style="left:133px;top:263px;width:76px;height:9px;background:repeating-linear-gradient(180deg,rgba(40,42,46,0.22) 0 1px,transparent 1px 1.7px)"></div>
<div class="a" style="left:133px;top:275px;width:76px;height:14px;background:repeating-linear-gradient(180deg,rgba(40,42,46,0.22) 0 1px,transparent 1px 1.7px)"></div>
<div class="a" style="left:126.5px;top:228px;width:5px;height:5px;border-radius:3px;background:#2b6a9a"></div>
<div class="a" style="left:126.5px;top:246px;width:5px;height:5px;border-radius:3px;background:#2b6a9a"></div>
<div class="a" style="left:126.5px;top:263px;width:5px;height:5px;border-radius:3px;background:#2b6a9a"></div>
<div class="a" style="left:126.5px;top:275px;width:5px;height:5px;border-radius:3px;background:#2b6a9a"></div>
<div class="a" style="left:127px;top:299px;width:41px;height:1px;background:#5c86a8"></div>
<div class="a" style="left:206px;top:299px;width:3px;height:1px;background:#3a4a7a"></div>
<div class="a" style="left:108px;top:350px;width:120px;height:152px;background:#8ab4f8"></div>
<div class="a" style="left:114px;top:356px;width:108px;height:140px;background:#fff;overflow:hidden"><div class="a" style="left:-101.8px;top:-33.55px;width:1920px;height:1300px;transform:scale(0.144);transform-origin:0 0"><div class="tx" style="left:795px;top:307px;font-size:13.6px;font-weight:bold;color:#0b75bd;letter-spacing:0.05px">FIGURE 3: STATE LABOR LAW GRADES BY STATE</div>
<svg class="a" style="left:817px;top:330px" width="530" height="442" viewBox="817 330 530 442">
<rect x="817" y="330" width="530" height="442" fill="#d8e1f2"/>
<g stroke="#fff" stroke-width="1.1" stroke-linejoin="round">
<polygon fill="#404041" points="878.25,356.25 889.50,363.75 890.00,367.50 887.00,373.00 890.75,373.00 894.50,357.00 933.25,371.90 923.25,400.00 904.50,393.00 892.00,391.00 880.75,388.75 879.00,385.00 872.60,378.75 874.50,371.00"/>
<polygon fill="#404041" points="872.60,378.75 879.00,385.00 880.75,388.75 892.00,391.00 904.50,393.00 923.25,400.00 924.50,405.00 914.50,416.00 914.50,418.75 907.00,440.00 881.00,432.50 848.90,418.75 850.00,410.00 864.50,392.50"/>
<polygon fill="#404041" points="848.90,418.75 881.00,432.50 867.60,462.50 900.00,521.25 900.75,531.25 893.25,541.90 892.00,545.60 865.00,541.25 865.75,533.75 858.25,520.00 850.75,512.50 841.40,506.25 843.25,500.00 837.60,482.50 840.75,478.75 838.25,470.00 838.25,461.00 835.75,450.00 838.90,445.00 838.90,432.50 845.75,427.50"/>
<polygon fill="#0072bc" points="881.00,432.50 907.00,440.00 930.00,448.00 913.25,501.25 909.50,511.25 903.25,510.00 900.00,519.40 867.60,462.50"/>
<polygon fill="#8eaad9" points="933.25,372.50 939.50,373.75 937.00,390.00 944.50,401.00 940.75,410.00 944.50,412.00 949.50,427.50 962.00,426.00 964.50,425.00 955.10,455.00 930.00,448.00 907.00,440.00 914.50,418.75 914.50,416.00 924.50,405.00 923.25,400.00"/>
<polygon fill="#7d7a9e" points="939.50,373.75 979.50,385.00 1025.75,392.00 1020.75,432.50 965.00,424.40 962.00,426.00 949.50,427.50 944.50,412.00 940.75,410.00 944.50,401.00 937.00,390.00"/>
<polygon fill="#8eaad9" points="965.00,424.40 1020.75,433.00 1015.75,475.00 970.00,470.00 953.90,465.00 955.10,455.00"/>
<polygon fill="#0072bc" points="930.00,448.00 955.10,455.00 953.90,465.00 970.00,470.00 961.50,513.00 913.25,501.25"/>
<polygon fill="#7d7a9e" points="970.00,470.00 1015.75,475.00 1033.25,477.50 1029.50,521.25 961.50,513.00"/>
<polygon fill="#8eaad9" points="913.25,501.25 961.50,513.00 946.00,577.00 923.25,572.50 889.50,549.40 893.25,545.00 900.75,531.90 900.00,521.25 903.25,510.60 909.50,511.25"/>
<polygon fill="#222d66" points="961.50,513.00 1018.25,523.10 1012.00,578.75 973.25,574.40 955.75,573.75 955.10,578.75 946.00,577.00"/>
<polygon fill="#ffcc05" points="1018.90,527.50 1048.25,530.00 1049.50,552.50 1059.50,557.50 1069.50,558.75 1079.50,560.00 1092.00,561.25 1098.25,560.00 1104.50,560.00 1109.50,563.75 1110.75,571.25 1115.75,585.00 1116.90,596.20 1115.50,607.00 1104.70,609.80 1102.00,612.50 1084.40,623.30 1074.90,631.50 1073.60,641.00 1076.30,655.80 1064.10,654.50 1053.20,649.00 1049.20,634.20 1037.00,620.60 1017.00,605.00 1007.00,612.50 992.00,600.00 983.25,585.00 974.50,575.00 1012.00,578.75"/>
<polygon fill="#8eaad9" points="1019.50,523.50 1101.40,524.40 1103.25,528.75 1104.50,560.00 1098.25,560.00 1092.00,561.25 1079.50,560.00 1069.50,558.75 1059.50,557.50 1049.50,552.50 1048.25,530.00 1018.90,527.50"/>
<polygon fill="#8eaad9" points="1033.25,489.40 1092.00,490.60 1099.50,493.75 1097.00,495.60 1100.75,500.00 1101.40,523.75 1029.50,521.25"/>
<polygon fill="#0072bc" points="1018.25,456.25 1067.00,458.75 1072.00,461.25 1077.00,460.00 1082.00,460.60 1085.00,468.75 1089.50,476.00 1092.00,486.90 1092.00,490.60 1033.25,489.40 1033.25,477.50 1015.75,475.00"/>
<polygon fill="#0072bc" points="1023.25,425.00 1081.40,428.10 1082.00,455.00 1082.00,460.60 1077.00,460.00 1072.00,461.25 1067.00,458.75 1018.25,456.25"/>
<polygon fill="#8eaad9" points="1026.40,393.10 1078.25,395.60 1081.40,428.10 1023.25,425.00"/>
<polygon fill="#7d7a9e" points="1078.25,395.60 1093.25,395.00 1093.90,391.25 1095.75,393.75 1096.40,396.25 1104.50,398.00 1114.50,401.25 1127.00,402.50 1135.75,401.90 1127.00,408.75 1117.00,416.90 1115.75,425.00 1112.00,428.75 1113.25,436.25 1127.00,447.50 1127.00,450.60 1083.25,451.90 1081.40,428.10"/>
<polygon fill="#ffe396" points="1083.25,451.90 1127.00,450.60 1129.50,456.25 1135.75,460.60 1138.90,466.25 1133.25,475.00 1130.75,476.25 1128.25,483.75 1092.00,484.50 1089.50,476.00 1085.00,468.75 1082.00,460.60 1082.00,455.00"/>
<polygon fill="#0072bc" points="1092.00,484.50 1128.25,483.75 1130.75,488.75 1137.00,496.25 1142.00,502.50 1152.00,515.00 1155.75,521.25 1152.00,525.00 1151.40,530.60 1147.00,531.25 1146.40,526.90 1103.25,528.75 1101.40,523.75 1100.75,500.00 1097.00,495.60 1099.50,493.75 1092.00,490.60 1092.00,486.90"/>
<polygon fill="#ffcc05" points="1103.25,528.75 1146.40,526.90 1147.00,531.25 1151.40,532.50 1149.50,542.50 1142.00,555.00 1139.50,567.50 1111.40,569.50 1109.50,563.75 1104.50,560.00"/>
<polygon fill="#0072bc" points="1111.40,569.50 1139.50,567.50 1142.00,568.75 1144.50,574.40 1140.75,581.25 1138.30,591.25 1158.60,591.25 1162.80,598.50 1154.00,598.50 1154.00,601.70 1164.40,602.70 1160.20,605.80 1168.50,610.50 1159.20,608.00 1157.10,611.60 1150.80,612.60 1142.50,606.90 1138.30,605.30 1133.60,606.90 1125.80,607.90 1114.90,607.90 1116.50,601.70 1117.50,591.25 1112.30,581.90"/>
<polygon fill="#ffe396" points="1142.00,555.00 1149.50,542.50 1170.75,541.30 1172.00,565.00 1174.80,593.30 1163.90,597.00 1158.60,591.25 1138.30,591.25 1140.75,581.25 1144.50,574.40 1142.00,568.75 1139.50,567.50"/>
<polygon fill="#8eaad9" points="1170.75,541.30 1197.00,537.50 1210.75,567.50 1209.50,580.00 1183.25,586.25 1184.70,593.90 1184.20,591.25 1179.00,589.20 1176.90,593.30 1174.80,593.30 1172.00,565.00"/>
<polygon fill="#ffcc05" points="1197.00,537.50 1219.50,533.50 1232.00,543.75 1247.00,552.50 1253.25,558.75 1252.00,575.30 1245.75,576.90 1244.50,581.25 1214.50,583.75 1209.50,580.00 1210.75,567.50"/>
<polygon fill="#ffe396" points="1183.25,586.25 1209.50,580.00 1214.50,583.75 1244.50,581.25 1245.75,576.90 1252.00,575.30 1257.00,582.50 1267.00,597.60 1283.40,616.60 1284.80,635.50 1276.70,640.90 1267.20,632.80 1259.10,623.30 1248.20,612.50 1242.80,597.60 1225.20,589.50 1213.00,596.20 1199.50,590.80 1186.00,592.90 1185.75,593.75"/>
<polygon fill="#ffcc05" points="1219.50,533.50 1232.00,526.00 1244.50,527.20 1257.00,526.25 1269.50,531.50 1265.75,542.50 1253.25,558.75 1247.00,552.50 1232.00,543.75"/>
<polygon fill="#ffcc05" points="1209.50,532.50 1230.00,509.00 1282.00,495.60 1284.50,496.25 1287.00,501.25 1280.75,503.75 1289.50,502.50 1290.75,505.00 1285.75,511.25 1287.00,513.75 1283.25,516.25 1275.75,530.00 1269.50,531.50 1257.00,526.25 1244.50,527.20 1232.00,526.00 1219.50,533.50"/>
<polygon fill="#ffcc05" points="1153.00,524.50 1213.25,513.10 1230.00,509.00 1209.50,532.50 1197.00,537.50 1170.75,541.30 1149.50,542.50 1151.40,532.50 1152.00,525.00"/>
<polygon fill="#8eaad9" points="1155.75,521.25 1159.50,517.50 1164.50,513.75 1167.00,506.90 1177.00,506.25 1185.75,496.25 1192.00,492.50 1197.00,492.50 1207.00,490.60 1217.60,491.25 1217.00,496.25 1223.25,501.25 1213.25,513.10 1153.00,524.50"/>
<polygon fill="#8eaad9" points="1213.25,513.10 1223.25,501.25 1232.00,501.25 1242.00,487.50 1249.50,472.50 1255.00,469.50 1260.00,471.00 1265.00,475.00 1265.00,478.00 1269.00,479.00 1272.50,478.00 1277.50,485.00 1282.50,492.50 1283.25,493.10 1282.00,495.60 1230.00,509.00"/>
<polygon fill="#ffe396" points="1217.60,491.25 1227.00,477.50 1230.75,471.90 1240.75,473.00 1249.50,470.50 1255.00,469.50 1255.00,471.00 1249.50,472.50 1242.00,487.50 1232.00,501.25 1223.25,501.25 1217.00,496.25"/>
<polygon fill="#7d7a9e" points="1188.25,462.50 1207.00,461.25 1222.00,451.90 1223.25,450.00 1230.75,471.90 1227.00,477.50 1217.60,491.25 1207.00,490.60 1197.00,492.50 1192.00,488.75"/>
<polygon fill="#ffcc05" points="1164.50,466.90 1187.00,463.10 1188.25,462.50 1192.00,488.75 1192.00,492.50 1185.75,496.25 1177.00,506.25 1167.00,506.90 1168.90,497.50 1166.40,485.00 1163.25,471.25"/>
<polygon fill="#404041" points="1135.75,460.60 1157.60,458.75 1163.25,466.25 1164.50,466.90 1163.25,471.25 1166.40,485.00 1168.90,497.50 1167.00,506.90 1164.50,513.75 1159.50,517.50 1154.50,517.50 1152.00,515.00 1142.00,502.50 1137.00,496.25 1130.75,488.75 1130.75,476.25 1133.25,475.00 1138.90,466.25"/>
<polygon fill="#ffe396" points="1113.10,426.25 1116.25,416.90 1126.25,414.40 1127.50,417.50 1133.75,418.75 1148.75,421.90 1153.75,423.75 1155.00,427.50 1159.40,427.50 1153.75,435.00 1157.50,432.50 1156.90,442.50 1158.10,456.90 1157.60,458.75 1136.25,460.00 1128.10,454.40 1126.90,446.90 1113.75,438.75 1111.90,428.75"/>
<polygon fill="#7d7a9e" points="1132.50,416.90 1140.00,411.25 1146.25,407.50 1151.25,404.40 1146.25,413.75 1153.75,414.40 1160.00,413.75 1165.00,410.60 1172.50,409.40 1180.00,411.25 1181.25,413.75 1176.25,416.25 1171.25,417.50 1165.00,418.75 1158.75,421.90 1156.25,426.25 1153.75,423.10 1148.75,421.90 1133.75,418.75"/>
<polygon fill="#7d7a9e" points="1176.25,420.00 1188.75,421.90 1191.90,431.25 1188.75,438.10 1196.90,434.40 1202.50,444.40 1198.75,456.90 1188.25,461.00 1186.25,462.00 1171.90,463.10 1171.25,451.25 1167.50,440.00 1167.50,432.50 1171.25,426.25"/>
<polygon fill="#7d7a9e" points="1223.25,450.00 1228.25,446.25 1265.00,436.50 1270.00,440.00 1273.50,443.50 1273.50,447.50 1278.50,453.50 1276.00,459.50 1272.00,462.00 1254.50,467.50 1230.75,471.90"/>
<polygon fill="#7d7a9e" points="1228.25,446.25 1232.00,437.50 1230.75,433.10 1239.50,431.25 1252.00,422.50 1249.50,415.60 1256.50,405.00 1268.00,401.00 1268.50,403.00 1271.00,406.00 1272.50,410.00 1278.00,418.00 1280.00,421.00 1280.50,423.00 1282.00,428.50 1282.00,430.50 1285.00,439.00 1294.00,435.00 1282.50,444.50 1282.50,441.00 1273.50,443.50 1270.00,440.00 1265.00,436.50"/>
<polygon fill="#7d7a9e" points="1268.00,401.00 1281.00,396.00 1282.00,400.00 1281.00,404.00 1284.00,419.50 1280.00,421.00 1278.00,418.00 1272.50,410.00 1271.00,406.00 1268.50,403.00"/>
<polygon fill="#7d7a9e" points="1282.00,392.00 1295.00,410.00 1297.50,413.00 1296.00,416.00 1285.00,419.50 1284.00,419.50 1281.00,404.00 1282.00,400.00"/>
<polygon fill="#7d7a9e" points="1282.00,392.00 1283.25,375.00 1284.50,365.00 1292.00,361.90 1295.75,363.75 1304.50,376.25 1314.50,380.00 1309.50,387.50 1305.00,390.00 1302.50,396.00 1298.00,402.50 1295.00,410.00"/>
<polygon fill="#222d66" points="1280.30,422.30 1296.00,416.30 1297.00,415.00 1298.30,416.30 1298.30,419.30 1305.30,422.00 1301.50,427.00 1298.00,424.20 1282.20,429.20"/>
<polygon fill="#7d7a9e" points="1282.00,430.50 1295.00,425.00 1296.00,433.00 1285.00,439.00"/>
<polygon fill="#7d7a9e" points="1295.00,425.00 1298.00,424.50 1299.00,430.00 1296.00,431.50"/>
<polygon fill="#222d66" points="1273.50,443.50 1280.50,443.25 1280.00,448.50 1283.00,449.50 1284.50,456.00 1283.00,463.00 1280.00,463.50 1276.50,461.00 1276.00,459.50 1278.50,453.50 1273.50,447.50"/>
<polygon fill="#404041" points="1240.75,472.50 1254.50,467.50 1272.00,462.00 1269.00,465.00 1269.50,470.00 1272.50,478.00 1269.00,479.00 1265.00,478.00 1265.00,475.00 1260.00,471.00 1255.00,469.50 1249.50,470.50"/>
<polygon fill="#7d7a9e" points="904.50,611.25 919.50,600.00 933.25,594.40 944.50,601.25 967.00,603.75 973.90,605.60 983.25,676.25 973.25,678.10 967.00,673.75 954.50,672.50 949.50,667.50 944.50,676.25 934.50,686.25 933.25,692.50 924.50,698.75 914.50,705.00 904.50,711.25 895.75,710.00 907.00,702.50 919.50,693.75 922.00,686.25 915.75,685.00 904.50,686.25 904.50,671.25 898.25,673.75 893.90,660.00 907.00,650.00 914.50,647.50 912.00,642.50 898.25,637.50 897.00,630.00 909.50,627.50 919.50,627.50 913.25,625.00"/>
<polygon fill="#7d7a9e" paint-order="stroke" points="877.00,640.00 880.00,641.00 885.75,647.50 883.00,648.00"/>
<polygon fill="#7d7a9e" paint-order="stroke" points="885.75,668.75 891.00,672.00 889.00,673.50"/>
<polygon fill="#7d7a9e" paint-order="stroke" points="865.75,721.25 872.00,716.00 876.00,716.50 869.00,721.50"/>
<polygon fill="#7d7a9e" paint-order="stroke" points="877.00,716.00 883.00,713.00 880.00,717.00"/>
<polygon fill="#7d7a9e" paint-order="stroke" points="886.00,712.50 892.00,710.50 890.00,713.00"/>
<polygon fill="#7d7a9e" paint-order="stroke" points="1233.30,680.90 1238.10,683.60 1248.20,688.30 1252.30,694.40 1259.10,699.20 1253.70,702.50 1248.20,705.90 1238.80,713.40 1232.70,705.90 1230.00,699.20 1229.30,692.40 1232.70,688.30"/>
<polygon fill="#7d7a9e" paint-order="stroke" points="1213.70,661.20 1218.40,663.30 1225.20,665.30 1230.00,667.30 1225.90,670.70 1219.80,670.70 1217.10,666.70"/>
<polygon fill="#7d7a9e" paint-order="stroke" points="1198.10,656.50 1204.90,655.20 1212.40,655.80 1211.00,658.50 1199.50,658.30"/>
<polygon fill="#7d7a9e" paint-order="stroke" points="1204.90,662.60 1209.00,662.90 1211.00,665.60 1207.00,666.70"/>
<polygon fill="#7d7a9e" paint-order="stroke" points="1175.80,645.00 1181.20,642.30 1184.60,647.00 1188.70,651.80 1184.60,652.40 1179.20,651.80"/>
<polygon fill="#7d7a9e" paint-order="stroke" points="1139.20,632.10 1145.30,628.10 1150.70,629.40 1150.70,634.80 1145.30,637.50 1140.60,634.80"/>
<polygon fill="#7d7a9e" paint-order="stroke" points="1127.70,638.20 1131.80,633.50 1132.50,636.20 1129.80,639.60"/>
<polygon fill="#404041" points="1271.50,463.00 1278.50,473.00 1283.00,472.00 1283.00,487.00 1280.50,483.00 1278.50,477.50 1273.50,475.00 1270.50,465.50"/>
<polygon fill="#7d7a9e" paint-order="stroke" points="983.25,676.25 990.75,674.40 999.50,683.10 1003.90,676.90 1013.25,681.90 1033.25,695.60 1033.90,705.00 1027.00,708.10 1019.50,700.00 1007.00,688.75 999.50,685.00 989.50,680.00"/>
<polygon fill="#7d7a9e" paint-order="stroke" points="1213.00,672.80 1217.10,670.00 1216.00,673.00"/>
<polygon fill="#222d66" points="1273.00,460.00 1278.50,466.50 1283.00,469.50 1280.00,473.50 1272.50,463.00"/>
</g>
<g font-family="Liberation Sans" font-weight="bold" font-size="8.6" fill="#fff" text-anchor="middle">
<text x="906.4" y="384.35">WA</text>
<text x="883.25" y="415.00">OR</text>
<text x="930.75" y="433.10">ID</text>
<text x="986.4" y="408.10">MT</text>
<text x="987.6" y="453.10">WY</text>
<text x="898.9" y="473.10">NV</text>
<text x="1052.6" y="413.70">ND</text>
<text x="1052.6" y="445.00">SD</text>
<text x="1058.9" y="475.60">NE</text>
<text x="1098.9" y="424.35">MN</text>
<text x="1140.1" y="443.10">WI</text>
<text x="1108.9" y="469.35">IA</text>
<text x="1186.4" y="451.85">MI</text>
<text x="1249.5" y="458.10">PA</text>
<text x="1206.4" y="478.10">OH</text>
<text x="1150.1" y="488.10">IL</text>
<text x="1179.5" y="485.00">IN</text>
<text x="1067.6" y="511.20">KS</text>
<text x="1122" y="511.85">MO</text>
<text x="1198.9" y="508.70">KY</text>
<text x="1230.1" y="491.85">WV</text>
<text x="1260" y="493.70">VA</text>
<text x="1184.5" y="531.85">TN</text>
<text x="1259.5" y="518.10">NC</text>
<text x="1249.5" y="541.85">SC</text>
<text x="1223.25" y="558.10">GA</text>
<text x="1186.4" y="561.85">AL</text>
<text x="1156.4" y="563.70">MS</text>
<text x="1125.1" y="550.00">AR</text>
<text x="1127" y="583.70">LA</text>
<text x="1070" y="541.85">OK</text>
<text x="1055.75" y="590.60">TX</text>
<text x="1259.5" y="609.35">FL</text>
<text x="860.75" y="490.00">CA</text>
<text x="943.25" y="483.10">UT</text>
<text x="997" y="500.60">CO</text>
<text x="926.4" y="541.85">AZ</text>
<text x="982.6" y="551.20">NM</text>
<text x="945.75" y="645.60">AK</text>
<text x="1244.2" y="698.90">HI</text>
<text x="1264.5" y="428.70">NY</text>
<text x="1275" y="406.85">VT</text>
<text x="1298" y="386.85">ME</text>
</g>
<g font-family="Liberation Sans" font-size="8.2" text-anchor="start">
<text x="1307.9" y="409.75" fill="#7d7a9e" font-weight="normal">NH</text>
<line x1="1297" y1="410.5" x2="1307" y2="407.25" stroke="#7d7a9e" stroke-width="1.2"/>
<text x="1314.6" y="421.75" fill="#222d66" font-weight="bold">MA</text>
<line x1="1297.5" y1="418.25" x2="1314" y2="418.25" stroke="#222d66" stroke-width="1.2"/>
<text x="1312.5" y="432.75" fill="#7d7a9e" font-weight="normal">RI</text>
<line x1="1298" y1="429.25" x2="1310.75" y2="429.25" stroke="#7d7a9e" stroke-width="1.2"/>
<text x="1309.8" y="447.5" fill="#7d7a9e" font-weight="normal">CT</text>
<line x1="1294" y1="434" x2="1309" y2="443" stroke="#7d7a9e" stroke-width="1.2"/>
<text x="1294.8" y="459.75" fill="#222d66" font-weight="bold">NJ</text>
<line x1="1284.5" y1="456" x2="1294" y2="456" stroke="#222d66" stroke-width="1.2"/>
<text x="1291.8" y="472.75" fill="#222d66" font-weight="bold">DE</text>
<line x1="1282" y1="469.5" x2="1291" y2="469.5" stroke="#222d66" stroke-width="1.2"/>
<text x="1290.6" y="484.75" fill="#404041" font-weight="bold">MD</text>
<line x1="1282.5" y1="481.5" x2="1289.5" y2="481.5" stroke="#404041" stroke-width="1.2"/>
</g>
<rect x="899.8" y="728.8" width="349.4" height="31.4" fill="#fff" stroke="#2d3a78" stroke-width="1.4"/>
<rect x="910.8" y="737.9" width="13" height="13" fill="#ffcc05"/>
<text x="928" y="750.9" font-family="Liberation Sans" font-weight="bold" font-size="17.5" fill="#0a71b9">A+</text>
<rect x="970.9" y="737.9" width="13" height="13" fill="#ffe396"/>
<text x="987" y="750.9" font-family="Liberation Sans" font-weight="bold" font-size="17.5" fill="#0a71b9">A</text>
<rect x="1018.2" y="737.9" width="13" height="13" fill="#8eaad9"/>
<text x="1033" y="750.9" font-family="Liberation Sans" font-weight="bold" font-size="17.5" fill="#0a71b9">B</text>
<rect x="1064" y="737.9" width="13" height="13" fill="#0072bc"/>
<text x="1080" y="750.9" font-family="Liberation Sans" font-weight="bold" font-size="17.5" fill="#0a71b9">C</text>
<rect x="1111" y="737.9" width="13" height="13" fill="#7d7a9e"/>
<text x="1127" y="750.9" font-family="Liberation Sans" font-weight="bold" font-size="17.5" fill="#0a71b9">D</text>
<rect x="1155" y="737.9" width="13" height="13" fill="#222d66"/>
<text x="1174" y="750.9" font-family="Liberation Sans" font-weight="bold" font-size="17.5" fill="#0a71b9">D-</text>
<rect x="1211.8" y="737.9" width="13" height="13" fill="#404041"/>
<text x="1227" y="750.9" font-family="Liberation Sans" font-weight="bold" font-size="17.5" fill="#0a71b9">F</text>
</svg>
<div class="a" style="left:795px;top:786px;width:574px;font-size:9.8px;line-height:11.05px;color:#0d0d0d">
<div style="position:relative;height:11.05px"><span style="position:absolute;left:0">Note:</span><div style="position:absolute;left:32px;right:0;text-align:justify;text-align-last:justify">Since the last installment of this report, the state evaluation process has changed. The “Is collective bargaining legal?”</div></div>
<div style="position:relative;height:11.05px;margin-left:11px;text-align:justify;text-align-last:justify">category has changed to “Is collective bargaining authorized in law?” to better evaluate states, such as Mississippi and West</div>
<div style="position:relative;height:11.05px;margin-left:11px;text-align:justify;text-align-last:justify">Virginia, where bargaining is neither authorized nor permitted by statute. The “paycheck protection” category breaks into two</div>
<div style="position:relative;height:11.05px;margin-left:11px;text-align:justify;text-align-last:justify">categories: one asking if a public employer can collect dues and one asking if a public employer can collect political money. The</div>
<div style="position:relative;height:11.05px;margin-left:11px;text-align:justify;text-align-last:justify">“right to exclusive representation” category is changed to “notable powers of exclusive representatives” to better capture recent</div>
<div style="position:relative;height:11.05px;margin-left:11px;text-align:justify;text-align-last:justify">trends with union access to employee contact information and charges to nonmembers for representation costs. There are now</div>
<div style="position:relative;height:11.05px;margin-left:11px;text-align:justify;text-align-last:justify">two additional categories, covering the duty to bargain and the statutory right to resign. These changes led to grade changes for</div>
<div style="position:relative;height:11.05px;margin-left:11px;text-align:justify;text-align-last:left">Hawaii, Kansas, Massachusetts, Mississippi, New Jersey, Oklahoma, Rhode Island, Virginia, West Virginia, and Wyoming.</div>
</div>
<div class="tx" style="left:790px;top:1150px;font-size:9px;font-weight:bold;color:#1a75bb">2024 50-STATE PUBLIC SECTOR LABOR LAWS</div><div class="tx" style="left:1345px;top:1150px;font-size:9px;font-weight:bold;color:#222d66">19</div></div></div>
<div class="a" style="left:114px;top:545px;width:108px;height:140px;background:#9c9d9e"></div>
<div class="a" style="left:127px;top:557px;width:51px;height:1px;background:rgba(40,40,40,0.5)"></div>
<div class="a" style="left:127px;top:562px;width:63px;height:1px;background:rgba(40,100,150,0.7)"></div>
<div class="a" style="left:131px;top:567px;width:15px;height:2.5px;background:#3a4a72"></div>
<div class="a" style="left:147px;top:567px;width:13px;height:2.5px;background:#3a4a72"></div>
<div class="a" style="left:161.5px;top:567px;width:13px;height:2.5px;background:#3a4a72"></div>
<div class="a" style="left:176px;top:567px;width:13px;height:2.5px;background:#3a4a72"></div>
<div class="a" style="left:190.5px;top:567px;width:13.5px;height:2.5px;background:#3a4a72"></div>
<div class="a" style="left:131px;top:572.6px;width:73px;height:0.6px;background:rgba(120,150,190,0.35)"></div>
<div class="a" style="left:134.5px;top:571px;width:8px;height:1px;background:rgba(50,60,90,0.55)"></div>
<div class="a" style="left:151.5px;top:571px;width:4px;height:1px;background:rgba(50,60,90,0.55)"></div>
<div class="a" style="left:166.0px;top:571px;width:4px;height:1px;background:rgba(50,60,90,0.55)"></div>
<div class="a" style="left:181.5px;top:571px;width:2px;height:1px;background:rgba(50,60,90,0.55)"></div>
<div class="a" style="left:195.8px;top:571px;width:3px;height:1px;background:rgba(50,60,90,0.55)"></div>
<div class="a" style="left:131px;top:575.6px;width:73px;height:0.6px;background:rgba(120,150,190,0.35)"></div>
<div class="a" style="left:133.5px;top:574px;width:10px;height:1px;background:rgba(50,60,90,0.55)"></div>
<div class="a" style="left:151.5px;top:574px;width:4px;height:1px;background:rgba(50,60,90,0.55)"></div>
<div class="a" style="left:166.0px;top:574px;width:4px;height:1px;background:rgba(50,60,90,0.55)"></div>
<div class="a" style="left:181.5px;top:574px;width:2px;height:1px;background:rgba(50,60,90,0.55)"></div>
<div class="a" style="left:195.2px;top:574px;width:4px;height:1px;background:rgba(50,60,90,0.55)"></div>
<div class="a" style="left:131px;top:578.1px;width:73px;height:0.6px;background:rgba(120,150,190,0.35)"></div>
<div class="a" style="left:135.0px;top:576.5px;width:7px;height:1px;background:rgba(50,60,90,0.55)"></div>
<div class="a" style="left:152.0px;top:576.5px;width:3px;height:1px;background:rgba(50,60,90,0.55)"></div>
<div class="a" style="left:166.5px;top:576.5px;width:3px;height:1px;background:rgba(50,60,90,0.55)"></div>
<div class="a" style="left:180.5px;top:576.5px;width:4px;height:1px;background:rgba(50,60,90,0.55)"></div>
<div class="a" style="left:196.2px;top:576.5px;width:2px;height:1px;background:rgba(50,60,90,0.55)"></div>
<div class="a" style="left:131px;top:580.6px;width:73px;height:0.6px;background:rgba(120,150,190,0.35)"></div>
<div class="a" style="left:134.5px;top:579px;width:8px;height:1px;background:rgba(50,60,90,0.55)"></div>
<div class="a" style="left:151.5px;top:579px;width:4px;height:1px;background:rgba(50,60,90,0.55)"></div>
<div class="a" style="left:166.5px;top:579px;width:3px;height:1px;background:rgba(50,60,90,0.55)"></div>
<div class="a" style="left:180.5px;top:579px;width:4px;height:1px;background:rgba(50,60,90,0.55)"></div>
<div class="a" style="left:195.2px;top:579px;width:4px;height:1px;background:rgba(50,60,90,0.55)"></div>
<div class="a" style="left:131px;top:583.6px;width:73px;height:0.6px;background:rgba(120,150,190,0.35)"></div>
<div class="a" style="left:133.5px;top:582px;width:10px;height:1px;background:rgba(50,60,90,0.55)"></div>
<div class="a" style="left:152.0px;top:582px;width:3px;height:1px;background:rgba(50,60,90,0.55)"></div>
<div class="a" style="left:166.0px;top:582px;width:4px;height:1px;background:rgba(50,60,90,0.55)"></div>
<div class="a" style="left:181.5px;top:582px;width:2px;height:1px;background:rgba(50,60,90,0.55)"></div>
<div class="a" style="left:196.2px;top:582px;width:2px;height:1px;background:rgba(50,60,90,0.55)"></div>
<div class="a" style="left:131px;top:586.6px;width:73px;height:0.6px;background:rgba(120,150,190,0.35)"></div>
<div class="a" style="left:134.5px;top:585px;width:8px;height:1px;background:rgba(50,60,90,0.55)"></div>
<div class="a" style="left:151.5px;top:585px;width:4px;height:1px;background:rgba(50,60,90,0.55)"></div>
<div class="a" style="left:166.5px;top:585px;width:3px;height:1px;background:rgba(50,60,90,0.55)"></div>
<div class="a" style="left:180.5px;top:585px;width:4px;height:1px;background:rgba(50,60,90,0.55)"></div>
<div class="a" style="left:196.2px;top:585px;width:2px;height:1px;background:rgba(50,60,90,0.55)"></div>
<div class="a" style="left:131px;top:589.1px;width:73px;height:0.6px;background:rgba(120,150,190,0.35)"></div>
<div class="a" style="left:135.0px;top:587.5px;width:7px;height:1px;background:rgba(50,60,90,0.55)"></div>
<div class="a" style="left:152.5px;top:587.5px;width:2px;height:1px;background:rgba(50,60,90,0.55)"></div>
<div class="a" style="left:166.0px;top:587.5px;width:4px;height:1px;background:rgba(50,60,90,0.55)"></div>
<div class="a" style="left:181.5px;top:587.5px;width:2px;height:1px;background:rgba(50,60,90,0.55)"></div>
<div class="a" style="left:195.8px;top:587.5px;width:3px;height:1px;background:rgba(50,60,90,0.55)"></div>
<div class="a" style="left:131px;top:591.6px;width:73px;height:0.6px;background:rgba(120,150,190,0.35)"></div>
<div class="a" style="left:135.0px;top:590px;width:7px;height:1px;background:rgba(50,60,90,0.55)"></div>
<div class="a" style="left:152.0px;top:590px;width:3px;height:1px;background:rgba(50,60,90,0.55)"></div>
<div class="a" style="left:166.5px;top:590px;width:3px;height:1px;background:rgba(50,60,90,0.55)"></div>
<div class="a" style="left:180.5px;top:590px;width:4px;height:1px;background:rgba(50,60,90,0.55)"></div>
<div class="a" style="left:195.2px;top:590px;width:4px;height:1px;background:rgba(50,60,90,0.55)"></div>
<div class="a" style="left:131px;top:594.6px;width:73px;height:0.6px;background:rgba(120,150,190,0.35)"></div>
<div class="a" style="left:133.5px;top:593px;width:10px;height:1px;background:rgba(50,60,90,0.55)"></div>
<div class="a" style="left:151.5px;top:593px;width:4px;height:1px;background:rgba(50,60,90,0.55)"></div>
<div class="a" style="left:166.5px;top:593px;width:3px;height:1px;background:rgba(50,60,90,0.55)"></div>
<div class="a" style="left:181.0px;top:593px;width:3px;height:1px;background:rgba(50,60,90,0.55)"></div>
<div class="a" style="left:195.2px;top:593px;width:4px;height:1px;background:rgba(50,60,90,0.55)"></div>
<div class="a" style="left:131px;top:597.6px;width:73px;height:0.6px;background:rgba(120,150,190,0.35)"></div>
<div class="a" style="left:133.5px;top:596px;width:10px;height:1px;background:rgba(50,60,90,0.55)"></div>
<div class="a" style="left:152.5px;top:596px;width:2px;height:1px;background:rgba(50,60,90,0.55)"></div>
<div class="a" style="left:166.5px;top:596px;width:3px;height:1px;background:rgba(50,60,90,0.55)"></div>
<div class="a" style="left:181.5px;top:596px;width:2px;height:1px;background:rgba(50,60,90,0.55)"></div>
<div class="a" style="left:196.2px;top:596px;width:2px;height:1px;background:rgba(50,60,90,0.55)"></div>
<div class="a" style="left:131px;top:600.1px;width:73px;height:0.6px;background:rgba(120,150,190,0.35)"></div>
<div class="a" style="left:134.5px;top:598.5px;width:8px;height:1px;background:rgba(50,60,90,0.55)"></div>
<div class="a" style="left:152.0px;top:598.5px;width:3px;height:1px;background:rgba(50,60,90,0.55)"></div>
<div class="a" style="left:167.0px;top:598.5px;width:2px;height:1px;background:rgba(50,60,90,0.55)"></div>
<div class="a" style="left:181.0px;top:598.5px;width:3px;height:1px;background:rgba(50,60,90,0.55)"></div>
<div class="a" style="left:195.2px;top:598.5px;width:4px;height:1px;background:rgba(50,60,90,0.55)"></div>
<div class="a" style="left:131px;top:602.6px;width:73px;height:0.6px;background:rgba(120,150,190,0.35)"></div>
<div class="a" style="left:133.5px;top:601px;width:10px;height:1px;background:rgba(50,60,90,0.55)"></div>
<div class="a" style="left:151.5px;top:601px;width:4px;height:1px;background:rgba(50,60,90,0.55)"></div>
<div class="a" style="left:166.5px;top:601px;width:3px;height:1px;background:rgba(50,60,90,0.55)"></div>
<div class="a" style="left:181.0px;top:601px;width:3px;height:1px;background:rgba(50,60,90,0.55)"></div>
<div class="a" style="left:195.2px;top:601px;width:4px;height:1px;background:rgba(50,60,90,0.55)"></div>
<div class="a" style="left:131px;top:605.6px;width:73px;height:0.6px;background:rgba(120,150,190,0.35)"></div>
<div class="a" style="left:133.5px;top:604px;width:10px;height:1px;background:rgba(50,60,90,0.55)"></div>
<div class="a" style="left:151.5px;top:604px;width:4px;height:1px;background:rgba(50,60,90,0.55)"></div>
<div class="a" style="left:166.5px;top:604px;width:3px;height:1px;background:rgba(50,60,90,0.55)"></div>
<div class="a" style="left:180.5px;top:604px;width:4px;height:1px;background:rgba(50,60,90,0.55)"></div>
<div class="a" style="left:195.2px;top:604px;width:4px;height:1px;background:rgba(50,60,90,0.55)"></div>
<div class="a" style="left:131px;top:608.6px;width:73px;height:0.6px;background:rgba(120,150,190,0.35)"></div>
<div class="a" style="left:133.5px;top:607px;width:10px;height:1px;background:rgba(50,60,90,0.55)"></div>
<div class="a" style="left:151.5px;top:607px;width:4px;height:1px;background:rgba(50,60,90,0.55)"></div>
<div class="a" style="left:167.0px;top:607px;width:2px;height:1px;background:rgba(50,60,90,0.55)"></div>
<div class="a" style="left:181.0px;top:607px;width:3px;height:1px;background:rgba(50,60,90,0.55)"></div>
<div class="a" style="left:195.2px;top:607px;width:4px;height:1px;background:rgba(50,60,90,0.55)"></div>
<div class="a" style="left:131px;top:611.1px;width:73px;height:0.6px;background:rgba(120,150,190,0.35)"></div>
<div class="a" style="left:135.0px;top:609.5px;width:7px;height:1px;background:rgba(50,60,90,0.55)"></div>
<div class="a" style="left:152.0px;top:609.5px;width:3px;height:1px;background:rgba(50,60,90,0.55)"></div>
<div class="a" style="left:166.0px;top:609.5px;width:4px;height:1px;background:rgba(50,60,90,0.55)"></div>
<div class="a" style="left:180.5px;top:609.5px;width:4px;height:1px;background:rgba(50,60,90,0.55)"></div>
<div class="a" style="left:195.2px;top:609.5px;width:4px;height:1px;background:rgba(50,60,90,0.55)"></div>
<div class="a" style="left:131px;top:613.6px;width:73px;height:0.6px;background:rgba(120,150,190,0.35)"></div>
<div class="a" style="left:134.5px;top:612px;width:8px;height:1px;background:rgba(50,60,90,0.55)"></div>
<div class="a" style="left:151.5px;top:612px;width:4px;height:1px;background:rgba(50,60,90,0.55)"></div>
<div class="a" style="left:166.5px;top:612px;width:3px;height:1px;background:rgba(50,60,90,0.55)"></div>
<div class="a" style="left:180.5px;top:612px;width:4px;height:1px;background:rgba(50,60,90,0.55)"></div>
<div class="a" style="left:195.2px;top:612px;width:4px;height:1px;background:rgba(50,60,90,0.55)"></div>
<div class="a" style="left:131px;top:616.6px;width:73px;height:0.6px;background:rgba(120,150,190,0.35)"></div>
<div class="a" style="left:135.0px;top:615px;width:7px;height:1px;background:rgba(50,60,90,0.55)"></div>
<div class="a" style="left:151.5px;top:615px;width:4px;height:1px;background:rgba(50,60,90,0.55)"></div>
<div class="a" style="left:166.0px;top:615px;width:4px;height:1px;background:rgba(50,60,90,0.55)"></div>
<div class="a" style="left:181.5px;top:615px;width:2px;height:1px;background:rgba(50,60,90,0.55)"></div>
<div class="a" style="left:195.2px;top:615px;width:4px;height:1px;background:rgba(50,60,90,0.55)"></div>
<div class="a" style="left:131px;top:619.6px;width:73px;height:0.6px;background:rgba(120,150,190,0.35)"></div>
<div class="a" style="left:134.0px;top:618px;width:9px;height:1px;background:rgba(50,60,90,0.55)"></div>
<div class="a" style="left:152.0px;top:618px;width:3px;height:1px;background:rgba(50,60,90,0.55)"></div>
<div class="a" style="left:167.0px;top:618px;width:2px;height:1px;background:rgba(50,60,90,0.55)"></div>
<div class="a" style="left:181.5px;top:618px;width:2px;height:1px;background:rgba(50,60,90,0.55)"></div>
<div class="a" style="left:195.8px;top:618px;width:3px;height:1px;background:rgba(50,60,90,0.55)"></div>
<div class="a" style="left:127px;top:625px;width:55px;height:1px;background:rgba(40,42,46,0.4)"></div>
<div class="a" style="left:130px;top:628px;width:78px;height:1px;background:rgba(40,42,46,0.32)"></div>
<div class="a" style="left:130px;top:630px;width:60px;height:1px;background:rgba(40,42,46,0.32)"></div>
<div class="a" style="left:127px;top:628px;width:1.5px;height:1.5px;background:#b89a30"></div>
<div class="a" style="left:130px;top:634px;width:78px;height:1px;background:rgba(40,42,46,0.32)"></div>
<div class="a" style="left:130px;top:636px;width:60px;height:1px;background:rgba(40,42,46,0.32)"></div>
<div class="a" style="left:127px;top:634px;width:1.5px;height:1.5px;background:#b89a30"></div>
<div class="a" style="left:130px;top:639px;width:78px;height:1px;background:rgba(40,42,46,0.32)"></div>
<div class="a" style="left:130px;top:641px;width:60px;height:1px;background:rgba(40,42,46,0.32)"></div>
<div class="a" style="left:127px;top:639px;width:1.5px;height:1.5px;background:#b89a30"></div>
<div class="a" style="left:130px;top:645.5px;width:78px;height:1px;background:rgba(40,42,46,0.32)"></div>
<div class="a" style="left:127px;top:645.5px;width:1.5px;height:1.5px;background:#b89a30"></div>
<div class="a" style="left:130px;top:648.5px;width:78px;height:1px;background:rgba(40,42,46,0.32)"></div>
<div class="a" style="left:130px;top:650.5px;width:60px;height:1px;background:rgba(40,42,46,0.32)"></div>
<div class="a" style="left:127px;top:648.5px;width:1.5px;height:1.5px;background:#b89a30"></div>
<div class="a" style="left:130px;top:654.5px;width:78px;height:1px;background:rgba(40,42,46,0.32)"></div>
<div class="a" style="left:130px;top:656.5px;width:60px;height:1px;background:rgba(40,42,46,0.32)"></div>
<div class="a" style="left:127px;top:654.5px;width:1.5px;height:1.5px;background:#b89a30"></div>
<div class="a" style="left:130px;top:660px;width:78px;height:1px;background:rgba(40,42,46,0.32)"></div>
<div class="a" style="left:127px;top:660px;width:1.5px;height:1.5px;background:#b89a30"></div>
<div class="a" style="left:130px;top:663.5px;width:78px;height:1px;background:rgba(40,42,46,0.32)"></div>
<div class="a" style="left:130px;top:665.5px;width:60px;height:1px;background:rgba(40,42,46,0.32)"></div>
<div class="a" style="left:127px;top:663.5px;width:1.5px;height:1.5px;background:#b89a30"></div>
<div class="a" style="left:130px;top:669.5px;width:78px;height:1px;background:rgba(40,42,46,0.32)"></div>
<div class="a" style="left:130px;top:671.5px;width:60px;height:1px;background:rgba(40,42,46,0.32)"></div>
<div class="a" style="left:127px;top:669.5px;width:1.5px;height:1.5px;background:#b89a30"></div>
<div class="a" style="left:127px;top:678px;width:41px;height:1px;background:#5c86a8"></div>
<div class="a" style="left:206px;top:678px;width:3px;height:1px;background:#3a4a7a"></div>
<div class="a" style="left:114px;top:734px;width:108px;height:140px;background:#9c9d9e"></div>
<div class="a" style="left:127px;top:741px;width:14px;height:1.5px;background:#4a5580"></div>
<div class="a" style="left:127px;top:744px;width:82px;height:6px;background:repeating-linear-gradient(180deg,rgba(40,42,46,0.22) 0 1px,transparent 1px 2.0px)"></div>
<div class="a" style="left:127px;top:752px;width:82px;height:12px;background:repeating-linear-gradient(180deg,rgba(40,42,46,0.22) 0 1px,transparent 1px 2.0px)"></div>
<div class="a" style="left:127px;top:766px;width:82px;height:13px;background:repeating-linear-gradient(180deg,rgba(40,42,46,0.22) 0 1px,transparent 1px 2.0px)"></div>
<div class="a" style="left:127px;top:781px;width:82px;height:11px;background:repeating-linear-gradient(180deg,rgba(40,42,46,0.22) 0 1px,transparent 1px 2.0px)"></div>
<div class="a" style="left:127px;top:793px;width:82px;height:11px;background:repeating-linear-gradient(180deg,rgba(40,42,46,0.22) 0 1px,transparent 1px 2.0px)"></div>
<div class="a" style="left:127px;top:806px;width:82px;height:10px;background:repeating-linear-gradient(180deg,rgba(40,42,46,0.22) 0 1px,transparent 1px 2.0px)"></div>
<div class="a" style="left:127px;top:817px;width:82px;height:20px;background:repeating-linear-gradient(180deg,rgba(40,42,46,0.22) 0 1px,transparent 1px 2.0px)"></div>
<div class="a" style="left:127px;top:855px;width:13px;height:1px;background:#222"></div>
<div class="a" style="left:127px;top:857px;width:82px;height:10px;background:repeating-linear-gradient(180deg,rgba(40,42,46,0.22) 0 1px,transparent 1px 2.0px)"></div>
<div class="a" style="left:127px;top:871px;width:41px;height:1px;background:#5c86a8"></div>
<div class="a" style="left:114px;top:923px;width:108px;height:140px;background:linear-gradient(135deg,#17223b 0%,#1d2c52 45%,#192746 70%,#141d33 100%)"></div>
<div class="a" style="left:128.5px;top:970px;width:79px;height:1px;background:#2c6a9a"></div>
<div class="a" style="left:128.5px;top:1014px;width:79px;height:1px;background:#2c6a9a"></div>
<div class="a" style="left:131px;top:983px;width:74px;height:2px;background:rgba(170,170,180,0.45)"></div>
<div class="tx" style="left:114px;top:989px;width:108px;text-align:center;font-size:6.1px;line-height:8px;font-weight:bold;color:#b59a3a">STATE PUBLIC SECTOR<br>LABOR LAWS</div>
<div class="a" style="left:114px;top:1112px;width:108px;height:8px;background:#9c9d9e"></div>
<div class="tx" style="left:148px;top:319.4px;width:40px;text-align:center;font-size:12.9px;color:#fff">18</div>
<div class="tx" style="left:148px;top:508.4px;width:40px;text-align:center;font-size:12.9px;color:#fff">19</div>
<div class="tx" style="left:148px;top:697.4px;width:40px;text-align:center;font-size:12.9px;color:#fff">20</div>
<div class="tx" style="left:148px;top:886.4px;width:40px;text-align:center;font-size:12.9px;color:#fff">21</div>
<div class="tx" style="left:148px;top:1075.4px;width:40px;text-align:center;font-size:12.9px;color:#fff">22</div>
<svg class="a" style="left:295px;top:236px" width="9" height="6" viewBox="0 0 9 6"><path d="M0 5.5 L4.5 0.5 L9 5.5Z" fill="#505050"/></svg>
<svg class="a" style="left:295px;top:1107px" width="9" height="6" viewBox="0 0 9 6"><path d="M0 0.5 L4.5 5.5 L9 0.5Z" fill="#505050"/></svg>
<div class="a" style="left:291px;top:230px;width:17px;height:890px;background:#f1f1f1"></div>
<div class="a" style="left:293px;top:442px;width:13px;height:53px;background:#c1c1c1"></div>
<!-- content -->
<div class="a" style="left:308px;top:230px;width:1548px;height:890px;background:#525659"></div>
<div class="a" style="left:1856px;top:230px;width:17px;height:890px;background:#f1f1f1"></div>
<div class="a" style="left:1858px;top:450px;width:13px;height:17px;background:#c1c1c1"></div>
<svg class="a" style="left:1860px;top:236px" width="9" height="6" viewBox="0 0 9 6"><path d="M0 5.5 L4.5 0.5 L9 5.5Z" fill="#505050"/></svg>
<svg class="a" style="left:1860px;top:1107px" width="9" height="6" viewBox="0 0 9 6"><path d="M0 0.5 L4.5 5.5 L9 0.5Z" fill="#505050"/></svg>
<div class="a" style="left:707px;top:233px;width:750px;height:887px;background:#fff;box-shadow:0 0 2px 1px rgba(0,0,0,0.35)"></div>
<div class="a" style="left:8px;top:230px;width:1848px;height:4px;background:linear-gradient(180deg,rgba(0,0,0,0.22),rgba(0,0,0,0))"></div>
<div class="tx" style="left:795px;top:307px;font-size:13.6px;font-weight:bold;color:#0b75bd;letter-spacing:0.05px">FIGURE 3: STATE LABOR LAW GRADES BY STATE</div>
<svg class="a" style="left:817px;top:330px" width="530" height="442" viewBox="817 330 530 442">
<rect x="817" y="330" width="530" height="442" fill="#d8e1f2"/>
<g stroke="#fff" stroke-width="1.1" stroke-linejoin="round">
<polygon fill="#404041" points="878.25,356.25 889.50,363.75 890.00,367.50 887.00,373.00 890.75,373.00 894.50,357.00 933.25,371.90 923.25,400.00 904.50,393.00 892.00,391.00 880.75,388.75 879.00,385.00 872.60,378.75 874.50,371.00"/>
<polygon fill="#404041" points="872.60,378.75 879.00,385.00 880.75,388.75 892.00,391.00 904.50,393.00 923.25,400.00 924.50,405.00 914.50,416.00 914.50,418.75 907.00,440.00 881.00,432.50 848.90,418.75 850.00,410.00 864.50,392.50"/>
<polygon fill="#404041" points="848.90,418.75 881.00,432.50 867.60,462.50 900.00,521.25 900.75,531.25 893.25,541.90 892.00,545.60 865.00,541.25 865.75,533.75 858.25,520.00 850.75,512.50 841.40,506.25 843.25,500.00 837.60,482.50 840.75,478.75 838.25,470.00 838.25,461.00 835.75,450.00 838.90,445.00 838.90,432.50 845.75,427.50"/>
<polygon fill="#0072bc" points="881.00,432.50 907.00,440.00 930.00,448.00 913.25,501.25 909.50,511.25 903.25,510.00 900.00,519.40 867.60,462.50"/>
<polygon fill="#8eaad9" points="933.25,372.50 939.50,373.75 937.00,390.00 944.50,401.00 940.75,410.00 944.50,412.00 949.50,427.50 962.00,426.00 964.50,425.00 955.10,455.00 930.00,448.00 907.00,440.00 914.50,418.75 914.50,416.00 924.50,405.00 923.25,400.00"/>
<polygon fill="#7d7a9e" points="939.50,373.75 979.50,385.00 1025.75,392.00 1020.75,432.50 965.00,424.40 962.00,426.00 949.50,427.50 944.50,412.00 940.75,410.00 944.50,401.00 937.00,390.00"/>
<polygon fill="#8eaad9" points="965.00,424.40 1020.75,433.00 1015.75,475.00 970.00,470.00 953.90,465.00 955.10,455.00"/>
<polygon fill="#0072bc" points="930.00,448.00 955.10,455.00 953.90,465.00 970.00,470.00 961.50,513.00 913.25,501.25"/>
<polygon fill="#7d7a9e" points="970.00,470.00 1015.75,475.00 1033.25,477.50 1029.50,521.25 961.50,513.00"/>
<polygon fill="#8eaad9" points="913.25,501.25 961.50,513.00 946.00,577.00 923.25,572.50 889.50,549.40 893.25,545.00 900.75,531.90 900.00,521.25 903.25,510.60 909.50,511.25"/>
<polygon fill="#222d66" points="961.50,513.00 1018.25,523.10 1012.00,578.75 973.25,574.40 955.75,573.75 955.10,578.75 946.00,577.00"/>
<polygon fill="#ffcc05" points="1018.90,527.50 1048.25,530.00 1049.50,552.50 1059.50,557.50 1069.50,558.75 1079.50,560.00 1092.00,561.25 1098.25,560.00 1104.50,560.00 1109.50,563.75 1110.75,571.25 1115.75,585.00 1116.90,596.20 1115.50,607.00 1104.70,609.80 1102.00,612.50 1084.40,623.30 1074.90,631.50 1073.60,641.00 1076.30,655.80 1064.10,654.50 1053.20,649.00 1049.20,634.20 1037.00,620.60 1017.00,605.00 1007.00,612.50 992.00,600.00 983.25,585.00 974.50,575.00 1012.00,578.75"/>
<polygon fill="#8eaad9" points="1019.50,523.50 1101.40,524.40 1103.25,528.75 1104.50,560.00 1098.25,560.00 1092.00,561.25 1079.50,560.00 1069.50,558.75 1059.50,557.50 1049.50,552.50 1048.25,530.00 1018.90,527.50"/>
<polygon fill="#8eaad9" points="1033.25,489.40 1092.00,490.60 1099.50,493.75 1097.00,495.60 1100.75,500.00 1101.40,523.75 1029.50,521.25"/>
<polygon fill="#0072bc" points="1018.25,456.25 1067.00,458.75 1072.00,461.25 1077.00,460.00 1082.00,460.60 1085.00,468.75 1089.50,476.00 1092.00,486.90 1092.00,490.60 1033.25,489.40 1033.25,477.50 1015.75,475.00"/>
<polygon fill="#0072bc" points="1023.25,425.00 1081.40,428.10 1082.00,455.00 1082.00,460.60 1077.00,460.00 1072.00,461.25 1067.00,458.75 1018.25,456.25"/>
<polygon fill="#8eaad9" points="1026.40,393.10 1078.25,395.60 1081.40,428.10 1023.25,425.00"/>
<polygon fill="#7d7a9e" points="1078.25,395.60 1093.25,395.00 1093.90,391.25 1095.75,393.75 1096.40,396.25 1104.50,398.00 1114.50,401.25 1127.00,402.50 1135.75,401.90 1127.00,408.75 1117.00,416.90 1115.75,425.00 1112.00,428.75 1113.25,436.25 1127.00,447.50 1127.00,450.60 1083.25,451.90 1081.40,428.10"/>
<polygon fill="#ffe396" points="1083.25,451.90 1127.00,450.60 1129.50,456.25 1135.75,460.60 1138.90,466.25 1133.25,475.00 1130.75,476.25 1128.25,483.75 1092.00,484.50 1089.50,476.00 1085.00,468.75 1082.00,460.60 1082.00,455.00"/>
<polygon fill="#0072bc" points="1092.00,484.50 1128.25,483.75 1130.75,488.75 1137.00,496.25 1142.00,502.50 1152.00,515.00 1155.75,521.25 1152.00,525.00 1151.40,530.60 1147.00,531.25 1146.40,526.90 1103.25,528.75 1101.40,523.75 1100.75,500.00 1097.00,495.60 1099.50,493.75 1092.00,490.60 1092.00,486.90"/>
<polygon fill="#ffcc05" points="1103.25,528.75 1146.40,526.90 1147.00,531.25 1151.40,532.50 1149.50,542.50 1142.00,555.00 1139.50,567.50 1111.40,569.50 1109.50,563.75 1104.50,560.00"/>
<polygon fill="#0072bc" points="1111.40,569.50 1139.50,567.50 1142.00,568.75 1144.50,574.40 1140.75,581.25 1138.30,591.25 1158.60,591.25 1162.80,598.50 1154.00,598.50 1154.00,601.70 1164.40,602.70 1160.20,605.80 1168.50,610.50 1159.20,608.00 1157.10,611.60 1150.80,612.60 1142.50,606.90 1138.30,605.30 1133.60,606.90 1125.80,607.90 1114.90,607.90 1116.50,601.70 1117.50,591.25 1112.30,581.90"/>
<polygon fill="#ffe396" points="1142.00,555.00 1149.50,542.50 1170.75,541.30 1172.00,565.00 1174.80,593.30 1163.90,597.00 1158.60,591.25 1138.30,591.25 1140.75,581.25 1144.50,574.40 1142.00,568.75 1139.50,567.50"/>
<polygon fill="#8eaad9" points="1170.75,541.30 1197.00,537.50 1210.75,567.50 1209.50,580.00 1183.25,586.25 1184.70,593.90 1184.20,591.25 1179.00,589.20 1176.90,593.30 1174.80,593.30 1172.00,565.00"/>
<polygon fill="#ffcc05" points="1197.00,537.50 1219.50,533.50 1232.00,543.75 1247.00,552.50 1253.25,558.75 1252.00,575.30 1245.75,576.90 1244.50,581.25 1214.50,583.75 1209.50,580.00 1210.75,567.50"/>
<polygon fill="#ffe396" points="1183.25,586.25 1209.50,580.00 1214.50,583.75 1244.50,581.25 1245.75,576.90 1252.00,575.30 1257.00,582.50 1267.00,597.60 1283.40,616.60 1284.80,635.50 1276.70,640.90 1267.20,632.80 1259.10,623.30 1248.20,612.50 1242.80,597.60 1225.20,589.50 1213.00,596.20 1199.50,590.80 1186.00,592.90 1185.75,593.75"/>
<polygon fill="#ffcc05" points="1219.50,533.50 1232.00,526.00 1244.50,527.20 1257.00,526.25 1269.50,531.50 1265.75,542.50 1253.25,558.75 1247.00,552.50 1232.00,543.75"/>
<polygon fill="#ffcc05" points="1209.50,532.50 1230.00,509.00 1282.00,495.60 1284.50,496.25 1287.00,501.25 1280.75,503.75 1289.50,502.50 1290.75,505.00 1285.75,511.25 1287.00,513.75 1283.25,516.25 1275.75,530.00 1269.50,531.50 1257.00,526.25 1244.50,527.20 1232.00,526.00 1219.50,533.50"/>
<polygon fill="#ffcc05" points="1153.00,524.50 1213.25,513.10 1230.00,509.00 1209.50,532.50 1197.00,537.50 1170.75,541.30 1149.50,542.50 1151.40,532.50 1152.00,525.00"/>
<polygon fill="#8eaad9" points="1155.75,521.25 1159.50,517.50 1164.50,513.75 1167.00,506.90 1177.00,506.25 1185.75,496.25 1192.00,492.50 1197.00,492.50 1207.00,490.60 1217.60,491.25 1217.00,496.25 1223.25,501.25 1213.25,513.10 1153.00,524.50"/>
<polygon fill="#8eaad9" points="1213.25,513.10 1223.25,501.25 1232.00,501.25 1242.00,487.50 1249.50,472.50 1255.00,469.50 1260.00,471.00 1265.00,475.00 1265.00,478.00 1269.00,479.00 1272.50,478.00 1277.50,485.00 1282.50,492.50 1283.25,493.10 1282.00,495.60 1230.00,509.00"/>
<polygon fill="#ffe396" points="1217.60,491.25 1227.00,477.50 1230.75,471.90 1240.75,473.00 1249.50,470.50 1255.00,469.50 1255.00,471.00 1249.50,472.50 1242.00,487.50 1232.00,501.25 1223.25,501.25 1217.00,496.25"/>
<polygon fill="#7d7a9e" points="1188.25,462.50 1207.00,461.25 1222.00,451.90 1223.25,450.00 1230.75,471.90 1227.00,477.50 1217.60,491.25 1207.00,490.60 1197.00,492.50 1192.00,488.75"/>
<polygon fill="#ffcc05" points="1164.50,466.90 1187.00,463.10 1188.25,462.50 1192.00,488.75 1192.00,492.50 1185.75,496.25 1177.00,506.25 1167.00,506.90 1168.90,497.50 1166.40,485.00 1163.25,471.25"/>
<polygon fill="#404041" points="1135.75,460.60 1157.60,458.75 1163.25,466.25 1164.50,466.90 1163.25,471.25 1166.40,485.00 1168.90,497.50 1167.00,506.90 1164.50,513.75 1159.50,517.50 1154.50,517.50 1152.00,515.00 1142.00,502.50 1137.00,496.25 1130.75,488.75 1130.75,476.25 1133.25,475.00 1138.90,466.25"/>
<polygon fill="#ffe396" points="1113.10,426.25 1116.25,416.90 1126.25,414.40 1127.50,417.50 1133.75,418.75 1148.75,421.90 1153.75,423.75 1155.00,427.50 1159.40,427.50 1153.75,435.00 1157.50,432.50 1156.90,442.50 1158.10,456.90 1157.60,458.75 1136.25,460.00 1128.10,454.40 1126.90,446.90 1113.75,438.75 1111.90,428.75"/>
<polygon fill="#7d7a9e" points="1132.50,416.90 1140.00,411.25 1146.25,407.50 1151.25,404.40 1146.25,413.75 1153.75,414.40 1160.00,413.75 1165.00,410.60 1172.50,409.40 1180.00,411.25 1181.25,413.75 1176.25,416.25 1171.25,417.50 1165.00,418.75 1158.75,421.90 1156.25,426.25 1153.75,423.10 1148.75,421.90 1133.75,418.75"/>
<polygon fill="#7d7a9e" points="1176.25,420.00 1188.75,421.90 1191.90,431.25 1188.75,438.10 1196.90,434.40 1202.50,444.40 1198.75,456.90 1188.25,461.00 1186.25,462.00 1171.90,463.10 1171.25,451.25 1167.50,440.00 1167.50,432.50 1171.25,426.25"/>
<polygon fill="#7d7a9e" points="1223.25,450.00 1228.25,446.25 1265.00,436.50 1270.00,440.00 1273.50,443.50 1273.50,447.50 1278.50,453.50 1276.00,459.50 1272.00,462.00 1254.50,467.50 1230.75,471.90"/>
<polygon fill="#7d7a9e" points="1228.25,446.25 1232.00,437.50 1230.75,433.10 1239.50,431.25 1252.00,422.50 1249.50,415.60 1256.50,405.00 1268.00,401.00 1268.50,403.00 1271.00,406.00 1272.50,410.00 1278.00,418.00 1280.00,421.00 1280.50,423.00 1282.00,428.50 1282.00,430.50 1285.00,439.00 1294.00,435.00 1282.50,444.50 1282.50,441.00 1273.50,443.50 1270.00,440.00 1265.00,436.50"/>
<polygon fill="#7d7a9e" points="1268.00,401.00 1281.00,396.00 1282.00,400.00 1281.00,404.00 1284.00,419.50 1280.00,421.00 1278.00,418.00 1272.50,410.00 1271.00,406.00 1268.50,403.00"/>
<polygon fill="#7d7a9e" points="1282.00,392.00 1295.00,410.00 1297.50,413.00 1296.00,416.00 1285.00,419.50 1284.00,419.50 1281.00,404.00 1282.00,400.00"/>
<polygon fill="#7d7a9e" points="1282.00,392.00 1283.25,375.00 1284.50,365.00 1292.00,361.90 1295.75,363.75 1304.50,376.25 1314.50,380.00 1309.50,387.50 1305.00,390.00 1302.50,396.00 1298.00,402.50 1295.00,410.00"/>
<polygon fill="#222d66" points="1280.30,422.30 1296.00,416.30 1297.00,415.00 1298.30,416.30 1298.30,419.30 1305.30,422.00 1301.50,427.00 1298.00,424.20 1282.20,429.20"/>
<polygon fill="#7d7a9e" points="1282.00,430.50 1295.00,425.00 1296.00,433.00 1285.00,439.00"/>
<polygon fill="#7d7a9e" points="1295.00,425.00 1298.00,424.50 1299.00,430.00 1296.00,431.50"/>
<polygon fill="#222d66" points="1273.50,443.50 1280.50,443.25 1280.00,448.50 1283.00,449.50 1284.50,456.00 1283.00,463.00 1280.00,463.50 1276.50,461.00 1276.00,459.50 1278.50,453.50 1273.50,447.50"/>
<polygon fill="#404041" points="1240.75,472.50 1254.50,467.50 1272.00,462.00 1269.00,465.00 1269.50,470.00 1272.50,478.00 1269.00,479.00 1265.00,478.00 1265.00,475.00 1260.00,471.00 1255.00,469.50 1249.50,470.50"/>
<polygon fill="#7d7a9e" points="904.50,611.25 919.50,600.00 933.25,594.40 944.50,601.25 967.00,603.75 973.90,605.60 983.25,676.25 973.25,678.10 967.00,673.75 954.50,672.50 949.50,667.50 944.50,676.25 934.50,686.25 933.25,692.50 924.50,698.75 914.50,705.00 904.50,711.25 895.75,710.00 907.00,702.50 919.50,693.75 922.00,686.25 915.75,685.00 904.50,686.25 904.50,671.25 898.25,673.75 893.90,660.00 907.00,650.00 914.50,647.50 912.00,642.50 898.25,637.50 897.00,630.00 909.50,627.50 919.50,627.50 913.25,625.00"/>
<polygon fill="#7d7a9e" paint-order="stroke" points="877.00,640.00 880.00,641.00 885.75,647.50 883.00,648.00"/>
<polygon fill="#7d7a9e" paint-order="stroke" points="885.75,668.75 891.00,672.00 889.00,673.50"/>
<polygon fill="#7d7a9e" paint-order="stroke" points="865.75,721.25 872.00,716.00 876.00,716.50 869.00,721.50"/>
<polygon fill="#7d7a9e" paint-order="stroke" points="877.00,716.00 883.00,713.00 880.00,717.00"/>
<polygon fill="#7d7a9e" paint-order="stroke" points="886.00,712.50 892.00,710.50 890.00,713.00"/>
<polygon fill="#7d7a9e" paint-order="stroke" points="1233.30,680.90 1238.10,683.60 1248.20,688.30 1252.30,694.40 1259.10,699.20 1253.70,702.50 1248.20,705.90 1238.80,713.40 1232.70,705.90 1230.00,699.20 1229.30,692.40 1232.70,688.30"/>
<polygon fill="#7d7a9e" paint-order="stroke" points="1213.70,661.20 1218.40,663.30 1225.20,665.30 1230.00,667.30 1225.90,670.70 1219.80,670.70 1217.10,666.70"/>
<polygon fill="#7d7a9e" paint-order="stroke" points="1198.10,656.50 1204.90,655.20 1212.40,655.80 1211.00,658.50 1199.50,658.30"/>
<polygon fill="#7d7a9e" paint-order="stroke" points="1204.90,662.60 1209.00,662.90 1211.00,665.60 1207.00,666.70"/>
<polygon fill="#7d7a9e" paint-order="stroke" points="1175.80,645.00 1181.20,642.30 1184.60,647.00 1188.70,651.80 1184.60,652.40 1179.20,651.80"/>
<polygon fill="#7d7a9e" paint-order="stroke" points="1139.20,632.10 1145.30,628.10 1150.70,629.40 1150.70,634.80 1145.30,637.50 1140.60,634.80"/>
<polygon fill="#7d7a9e" paint-order="stroke" points="1127.70,638.20 1131.80,633.50 1132.50,636.20 1129.80,639.60"/>
<polygon fill="#404041" points="1271.50,463.00 1278.50,473.00 1283.00,472.00 1283.00,487.00 1280.50,483.00 1278.50,477.50 1273.50,475.00 1270.50,465.50"/>
<polygon fill="#7d7a9e" paint-order="stroke" points="983.25,676.25 990.75,674.40 999.50,683.10 1003.90,676.90 1013.25,681.90 1033.25,695.60 1033.90,705.00 1027.00,708.10 1019.50,700.00 1007.00,688.75 999.50,685.00 989.50,680.00"/>
<polygon fill="#7d7a9e" paint-order="stroke" points="1213.00,672.80 1217.10,670.00 1216.00,673.00"/>
<polygon fill="#222d66" points="1273.00,460.00 1278.50,466.50 1283.00,469.50 1280.00,473.50 1272.50,463.00"/>
</g>
<g font-family="Liberation Sans" font-weight="bold" font-size="8.6" fill="#fff" text-anchor="middle">
<text x="906.4" y="384.35">WA</text>
<text x="883.25" y="415.00">OR</text>
<text x="930.75" y="433.10">ID</text>
<text x="986.4" y="408.10">MT</text>
<text x="987.6" y="453.10">WY</text>
<text x="898.9" y="473.10">NV</text>
<text x="1052.6" y="413.70">ND</text>
<text x="1052.6" y="445.00">SD</text>
<text x="1058.9" y="475.60">NE</text>
<text x="1098.9" y="424.35">MN</text>
<text x="1140.1" y="443.10">WI</text>
<text x="1108.9" y="469.35">IA</text>
<text x="1186.4" y="451.85">MI</text>
<text x="1249.5" y="458.10">PA</text>
<text x="1206.4" y="478.10">OH</text>
<text x="1150.1" y="488.10">IL</text>
<text x="1179.5" y="485.00">IN</text>
<text x="1067.6" y="511.20">KS</text>
<text x="1122" y="511.85">MO</text>
<text x="1198.9" y="508.70">KY</text>
<text x="1230.1" y="491.85">WV</text>
<text x="1260" y="493.70">VA</text>
<text x="1184.5" y="531.85">TN</text>
<text x="1259.5" y="518.10">NC</text>
<text x="1249.5" y="541.85">SC</text>
<text x="1223.25" y="558.10">GA</text>
<text x="1186.4" y="561.85">AL</text>
<text x="1156.4" y="563.70">MS</text>
<text x="1125.1" y="550.00">AR</text>
<text x="1127" y="583.70">LA</text>
<text x="1070" y="541.85">OK</text>
<text x="1055.75" y="590.60">TX</text>
<text x="1259.5" y="609.35">FL</text>
<text x="860.75" y="490.00">CA</text>
<text x="943.25" y="483.10">UT</text>
<text x="997" y="500.60">CO</text>
<text x="926.4" y="541.85">AZ</text>
<text x="982.6" y="551.20">NM</text>
<text x="945.75" y="645.60">AK</text>
<text x="1244.2" y="698.90">HI</text>
<text x="1264.5" y="428.70">NY</text>
<text x="1275" y="406.85">VT</text>
<text x="1298" y="386.85">ME</text>
</g>
<g font-family="Liberation Sans" font-size="8.2" text-anchor="start">
<text x="1307.9" y="409.75" fill="#7d7a9e" font-weight="normal">NH</text>
<line x1="1297" y1="410.5" x2="1307" y2="407.25" stroke="#7d7a9e" stroke-width="1.2"/>
<text x="1314.6" y="421.75" fill="#222d66" font-weight="bold">MA</text>
<line x1="1297.5" y1="418.25" x2="1314" y2="418.25" stroke="#222d66" stroke-width="1.2"/>
<text x="1312.5" y="432.75" fill="#7d7a9e" font-weight="normal">RI</text>
<line x1="1298" y1="429.25" x2="1310.75" y2="429.25" stroke="#7d7a9e" stroke-width="1.2"/>
<text x="1309.8" y="447.5" fill="#7d7a9e" font-weight="normal">CT</text>
<line x1="1294" y1="434" x2="1309" y2="443" stroke="#7d7a9e" stroke-width="1.2"/>
<text x="1294.8" y="459.75" fill="#222d66" font-weight="bold">NJ</text>
<line x1="1284.5" y1="456" x2="1294" y2="456" stroke="#222d66" stroke-width="1.2"/>
<text x="1291.8" y="472.75" fill="#222d66" font-weight="bold">DE</text>
<line x1="1282" y1="469.5" x2="1291" y2="469.5" stroke="#222d66" stroke-width="1.2"/>
<text x="1290.6" y="484.75" fill="#404041" font-weight="bold">MD</text>
<line x1="1282.5" y1="481.5" x2="1289.5" y2="481.5" stroke="#404041" stroke-width="1.2"/>
</g>
<rect x="899.8" y="728.8" width="349.4" height="31.4" fill="#fff" stroke="#2d3a78" stroke-width="1.4"/>
<rect x="910.8" y="737.9" width="13" height="13" fill="#ffcc05"/>
<text x="928" y="750.9" font-family="Liberation Sans" font-weight="bold" font-size="17.5" fill="#0a71b9">A+</text>
<rect x="970.9" y="737.9" width="13" height="13" fill="#ffe396"/>
<text x="987" y="750.9" font-family="Liberation Sans" font-weight="bold" font-size="17.5" fill="#0a71b9">A</text>
<rect x="1018.2" y="737.9" width="13" height="13" fill="#8eaad9"/>
<text x="1033" y="750.9" font-family="Liberation Sans" font-weight="bold" font-size="17.5" fill="#0a71b9">B</text>
<rect x="1064" y="737.9" width="13" height="13" fill="#0072bc"/>
<text x="1080" y="750.9" font-family="Liberation Sans" font-weight="bold" font-size="17.5" fill="#0a71b9">C</text>
<rect x="1111" y="737.9" width="13" height="13" fill="#7d7a9e"/>
<text x="1127" y="750.9" font-family="Liberation Sans" font-weight="bold" font-size="17.5" fill="#0a71b9">D</text>
<rect x="1155" y="737.9" width="13" height="13" fill="#222d66"/>
<text x="1174" y="750.9" font-family="Liberation Sans" font-weight="bold" font-size="17.5" fill="#0a71b9">D-</text>
<rect x="1211.8" y="737.9" width="13" height="13" fill="#404041"/>
<text x="1227" y="750.9" font-family="Liberation Sans" font-weight="bold" font-size="17.5" fill="#0a71b9">F</text>
</svg>
<div class="a" style="left:795px;top:786px;width:574px;font-size:9.8px;line-height:11.05px;color:#0d0d0d">
<div style="position:relative;height:11.05px"><span style="position:absolute;left:0">Note:</span><div style="position:absolute;left:32px;right:0;text-align:justify;text-align-last:justify">Since the last installment of this report, the state evaluation process has changed. The “Is collective bargaining legal?”</div></div>
<div style="position:relative;height:11.05px;margin-left:11px;text-align:justify;text-align-last:justify">category has changed to “Is collective bargaining authorized in law?” to better evaluate states, such as Mississippi and West</div>
<div style="position:relative;height:11.05px;margin-left:11px;text-align:justify;text-align-last:justify">Virginia, where bargaining is neither authorized nor permitted by statute. The “paycheck protection” category breaks into two</div>
<div style="position:relative;height:11.05px;margin-left:11px;text-align:justify;text-align-last:justify">categories: one asking if a public employer can collect dues and one asking if a public employer can collect political money. The</div>
<div style="position:relative;height:11.05px;margin-left:11px;text-align:justify;text-align-last:justify">“right to exclusive representation” category is changed to “notable powers of exclusive representatives” to better capture recent</div>
<div style="position:relative;height:11.05px;margin-left:11px;text-align:justify;text-align-last:justify">trends with union access to employee contact information and charges to nonmembers for representation costs. There are now</div>
<div style="position:relative;height:11.05px;margin-left:11px;text-align:justify;text-align-last:justify">two additional categories, covering the duty to bargain and the statutory right to resign. These changes led to grade changes for</div>
<div style="position:relative;height:11.05px;margin-left:11px;text-align:justify;text-align-last:left">Hawaii, Kansas, Massachusetts, Mississippi, New Jersey, Oklahoma, Rhode Island, Virginia, West Virginia, and Wyoming.</div>
</div>

<div class="a" style="left:0;top:1160px;width:1920px;height:40px;background:#45161b"></div>
<svg class="a" style="left:16px;top:1172px" width="17" height="17" viewBox="0 0 17 17"><path d="M0 2.4 L7 1.4 V8 H0 Z M8 1.2 L17 0 V8 H8 Z M0 9 H7 V15.6 L0 14.6 Z M8 9 H17 V17 L8 15.8 Z" fill="#fff"/></svg>
<svg class="a" style="left:61px;top:1169px" width="23" height="23" viewBox="0 0 23 23"><circle cx="13.5" cy="9.5" r="7.5" stroke="#fff" stroke-width="1.8" fill="none"/><path d="M8 15 L1.5 21.5" stroke="#fff" stroke-width="2"/></svg>
<svg class="a" style="left:111px;top:1168px" width="24" height="24" viewBox="0 0 24 24"><rect width="24" height="24" fill="#0b78d4"/><rect x="8" y="3" width="13" height="10" stroke="#fff" stroke-width="1.5" fill="none"/><rect x="3" y="7" width="13" height="10" stroke="#fff" stroke-width="1.5" fill="#0b78d4"/><path d="M9.5 17 V20 M6 20.5 H13" stroke="#fff" stroke-width="1.5"/></svg>
<svg class="a" style="left:160px;top:1168px" width="24" height="24" viewBox="0 0 24 24"><path d="M0 9 L12 1 L24 9 V23 H0 Z" fill="#1a8ee6"/><path d="M2 9 L12 3 L22 9 L12 15 Z" fill="#fff"/><path d="M0 9 L12 17 L24 9 V23 H0Z" fill="#38b4f4"/><path d="M0 23 L12 15 L24 23Z" fill="#65cdf9"/></svg>
<svg class="a" style="left:207px;top:1168px" width="24" height="24" viewBox="0 0 24 24"><circle cx="12" cy="12" r="11.5" fill="#1e8fd9"/><path d="M2 15 Q3 4 13 3 Q22 3 23 11 Q23 16 17 16 H9 Q9 20 15 21 Q8 24 4 20 Q1 18 2 15Z" fill="#2fc48d"/><path d="M9 14 Q9 9 14 9 Q18 9 19 12 H9Z" fill="#fff" opacity="0"/><path d="M6 13 Q6 7 12 7 Q17 7 18 12 H8 Q8 18 14 19 Q6 20 6 13Z" fill="#0c59a8"/></svg>
<div class="tx" style="left:235px;top:1172.5px;font-size:13px;letter-spacing:-0.40px;color:#fff">@lrm-bbw on Tum...</div>
<div class="a" style="left:201px;top:1198px;width:152px;height:2px;background:#e8a0a8"></div>
<div class="a" style="left:358px;top:1160px;width:160px;height:40px;background:#7b1c23"></div>
<div class="a" style="left:358px;top:1198px;width:160px;height:2px;background:#f2b6bd"></div>
<svg class="a" style="left:368px;top:1168px" width="24" height="24" viewBox="0 0 24 24"><circle cx="12" cy="12" r="11.5" fill="#db4437"/><path d="M12 12 L2.04 17.75 A11.5 11.5 0 0 0 12 23.5 A11.5 11.5 0 0 0 21.96 17.75 Z" fill="#0f9d58"/><path d="M12 12 L21.96 17.75 A11.5 11.5 0 0 0 21.96 6.25 L12 6.25Z" fill="#ffcd40"/><path d="M12 12 L12 23.5 A11.5 11.5 0 0 1 2.04 17.75Z" fill="#0f9d58"/><circle cx="12" cy="12" r="5.3" fill="#fff"/><circle cx="12" cy="12" r="4.2" fill="#4285f4"/></svg>
<div class="tx" style="left:396px;top:1172.5px;font-size:13px;letter-spacing:-0.62px;color:#fff">50-State-Public-Se...</div>
<svg class="a" style="left:531px;top:1168px" width="22" height="22" viewBox="0 0 22 22"><path d="M0 3 H8 L10 5 H22 V18 H0 Z" fill="#f8c845"/><path d="M0 7 H22 V18 H0Z" fill="#ffd96b"/><rect x="6" y="14" width="10" height="6" fill="#2d8ee0"/><rect x="9" y="16" width="4" height="4" fill="#ffd96b"/></svg>
<svg class="a" style="left:578px;top:1167px" width="25" height="25" viewBox="0 0 25 25"><rect x="6" y="1" width="18" height="23" rx="1.5" fill="#21a366"/><rect x="6" y="8" width="18" height="8" fill="#107c41"/><rect x="6" y="16" width="18" height="8" fill="#185c37"/><rect x="14" y="1" width="10" height="7" fill="#33c481"/><rect x="0" y="5" width="13" height="14" rx="1.5" fill="#107c41"/><path d="M3.5 8 L9.5 16 M9.5 8 L3.5 16" stroke="#fff" stroke-width="1.8"/></svg>
<div class="tx" style="left:606px;top:1172.5px;font-size:13px;letter-spacing:-0.44px;color:#fff">NM Media Contact...</div>
<div class="a" style="left:572px;top:1198px;width:152px;height:2px;background:#e8a0a8"></div>
<svg class="a" style="left:738px;top:1167px" width="25" height="25" viewBox="0 0 25 25"><rect x="6" y="1" width="18" height="23" rx="1.5" fill="#21a366"/><rect x="6" y="8" width="18" height="8" fill="#107c41"/><rect x="6" y="16" width="18" height="8" fill="#185c37"/><rect x="14" y="1" width="10" height="7" fill="#33c481"/><rect x="0" y="5" width="13" height="14" rx="1.5" fill="#107c41"/><path d="M3.5 8 L9.5 16 M9.5 8 L3.5 16" stroke="#fff" stroke-width="1.8"/></svg>
<div class="tx" style="left:766px;top:1172.5px;font-size:13px;letter-spacing:-0.68px;color:#fff">2024 Primary Candi...</div>
<div class="a" style="left:732px;top:1198px;width:152px;height:2px;background:#e8a0a8"></div>
<svg class="a" style="left:898px;top:1167px" width="25" height="25" viewBox="0 0 25 25"><rect x="6" y="1" width="18" height="23" rx="1.5" fill="#41a5ee"/><rect x="6" y="8" width="18" height="8" fill="#2b7cd3"/><rect x="6" y="16" width="18" height="8" fill="#185abd"/><rect x="0" y="5" width="13" height="14" rx="1.5" fill="#185abd"/><path d="M2.5 8 L4.5 16 L6.5 10 L8.5 16 L10.5 8" stroke="#fff" stroke-width="1.5" fill="none"/></svg>
<div class="tx" style="left:927px;top:1172.5px;font-size:13px;letter-spacing:-0.53px;color:#fff">Important Rio Gran...</div>
<div class="a" style="left:893px;top:1198px;width:152px;height:2px;background:#e8a0a8"></div>
<svg class="a" style="left:1058px;top:1167px" width="25" height="25" viewBox="0 0 25 25"><rect x="6" y="1" width="18" height="23" rx="1.5" fill="#41a5ee"/><rect x="6" y="8" width="18" height="8" fill="#2b7cd3"/><rect x="6" y="16" width="18" height="8" fill="#185abd"/><rect x="0" y="5" width="13" height="14" rx="1.5" fill="#185abd"/><path d="M2.5 8 L4.5 16 L6.5 10 L8.5 16 L10.5 8" stroke="#fff" stroke-width="1.5" fill="none"/></svg>
<div class="tx" style="left:1087px;top:1172.5px;font-size:13px;letter-spacing:-0.66px;color:#fff">Judges.docx&nbsp; -&nbsp; Last...</div>
<div class="a" style="left:1053px;top:1198px;width:152px;height:2px;background:#e8a0a8"></div>
<svg class="a" style="left:1580px;top:1171px" width="24" height="18" viewBox="0 0 24 18"><path d="M1 6 H14 M1 10 H16 M3 14 H13" stroke="#b9cde6" stroke-width="1.6"/><circle cx="15" cy="5" r="4" fill="#9cc0e8"/><circle cx="20" cy="11" r="3.5" fill="#7fa8d8"/></svg>
<div class="tx" style="left:1612px;top:1172px;font-size:14px;color:#fff">90°F&nbsp; Windy</div>
<svg class="a" style="left:1713px;top:1175px" width="12" height="8" viewBox="0 0 12 8"><path d="M0.5 7.5 L6 1.5 L11.5 7.5" stroke="#fff" stroke-width="1.4" fill="none"/></svg>
<svg class="a" style="left:1735px;top:1173px" width="17" height="11" viewBox="0 0 17 11"><path d="M3 10.5 Q0 10.5 0.5 7.5 Q1 5 4 5.2 Q5 1 9 1 Q12.5 1 13.5 4.5 Q17 4.5 16.5 8 Q16 10.5 13.5 10.5Z" fill="#ddd"/><path d="M4 5.2 Q6 4 8 6 Q9 3.5 13.5 4.5" stroke="#a08a8a" stroke-width="0.9" fill="none"/></svg>
<svg class="a" style="left:1759px;top:1172px" width="16" height="15" viewBox="0 0 16 15"><path d="M1 14 A13 13 0 0 1 14 1 M4 14 A10 10 0 0 1 14 4 M7 14 A7 7 0 0 1 14 7 M10 14 A4 4 0 0 1 14 10" stroke="#fff" stroke-width="1.1" fill="none"/><circle cx="13.5" cy="13.5" r="1.4" fill="#fff"/></svg>
<svg class="a" style="left:1782px;top:1171px" width="17" height="16" viewBox="0 0 17 16"><path d="M1 5 H4 L8 1.5 V14.5 L4 11 H1 Z" stroke="#fff" stroke-width="1.1" fill="none"/><path d="M10.5 5.5 Q12 8 10.5 10.5 M12.5 3.5 Q15 8 12.5 12.5 M14.5 1.5 Q18 8 14.5 14.5" stroke="#fff" stroke-width="1.1" fill="none"/></svg>
<div class="tx" style="left:1806px;top:1163px;width:56px;text-align:center;font-size:12px;line-height:18px;color:#fff">6:23 PM<br>9/12/2024</div>
<svg class="a" style="left:1878px;top:1171px" width="19" height="18" viewBox="0 0 19 18"><path d="M0.7 0.7 H18.3 V12.5 H12 L9.5 16.5 L7 12.5 H0.7 Z" stroke="#fff" stroke-width="1.3" fill="none" stroke-linejoin="round"/></svg>
<div class="a" style="left:1919px;top:1160px;width:1px;height:40px;background:#7a4a50"></div>


</body></html>
